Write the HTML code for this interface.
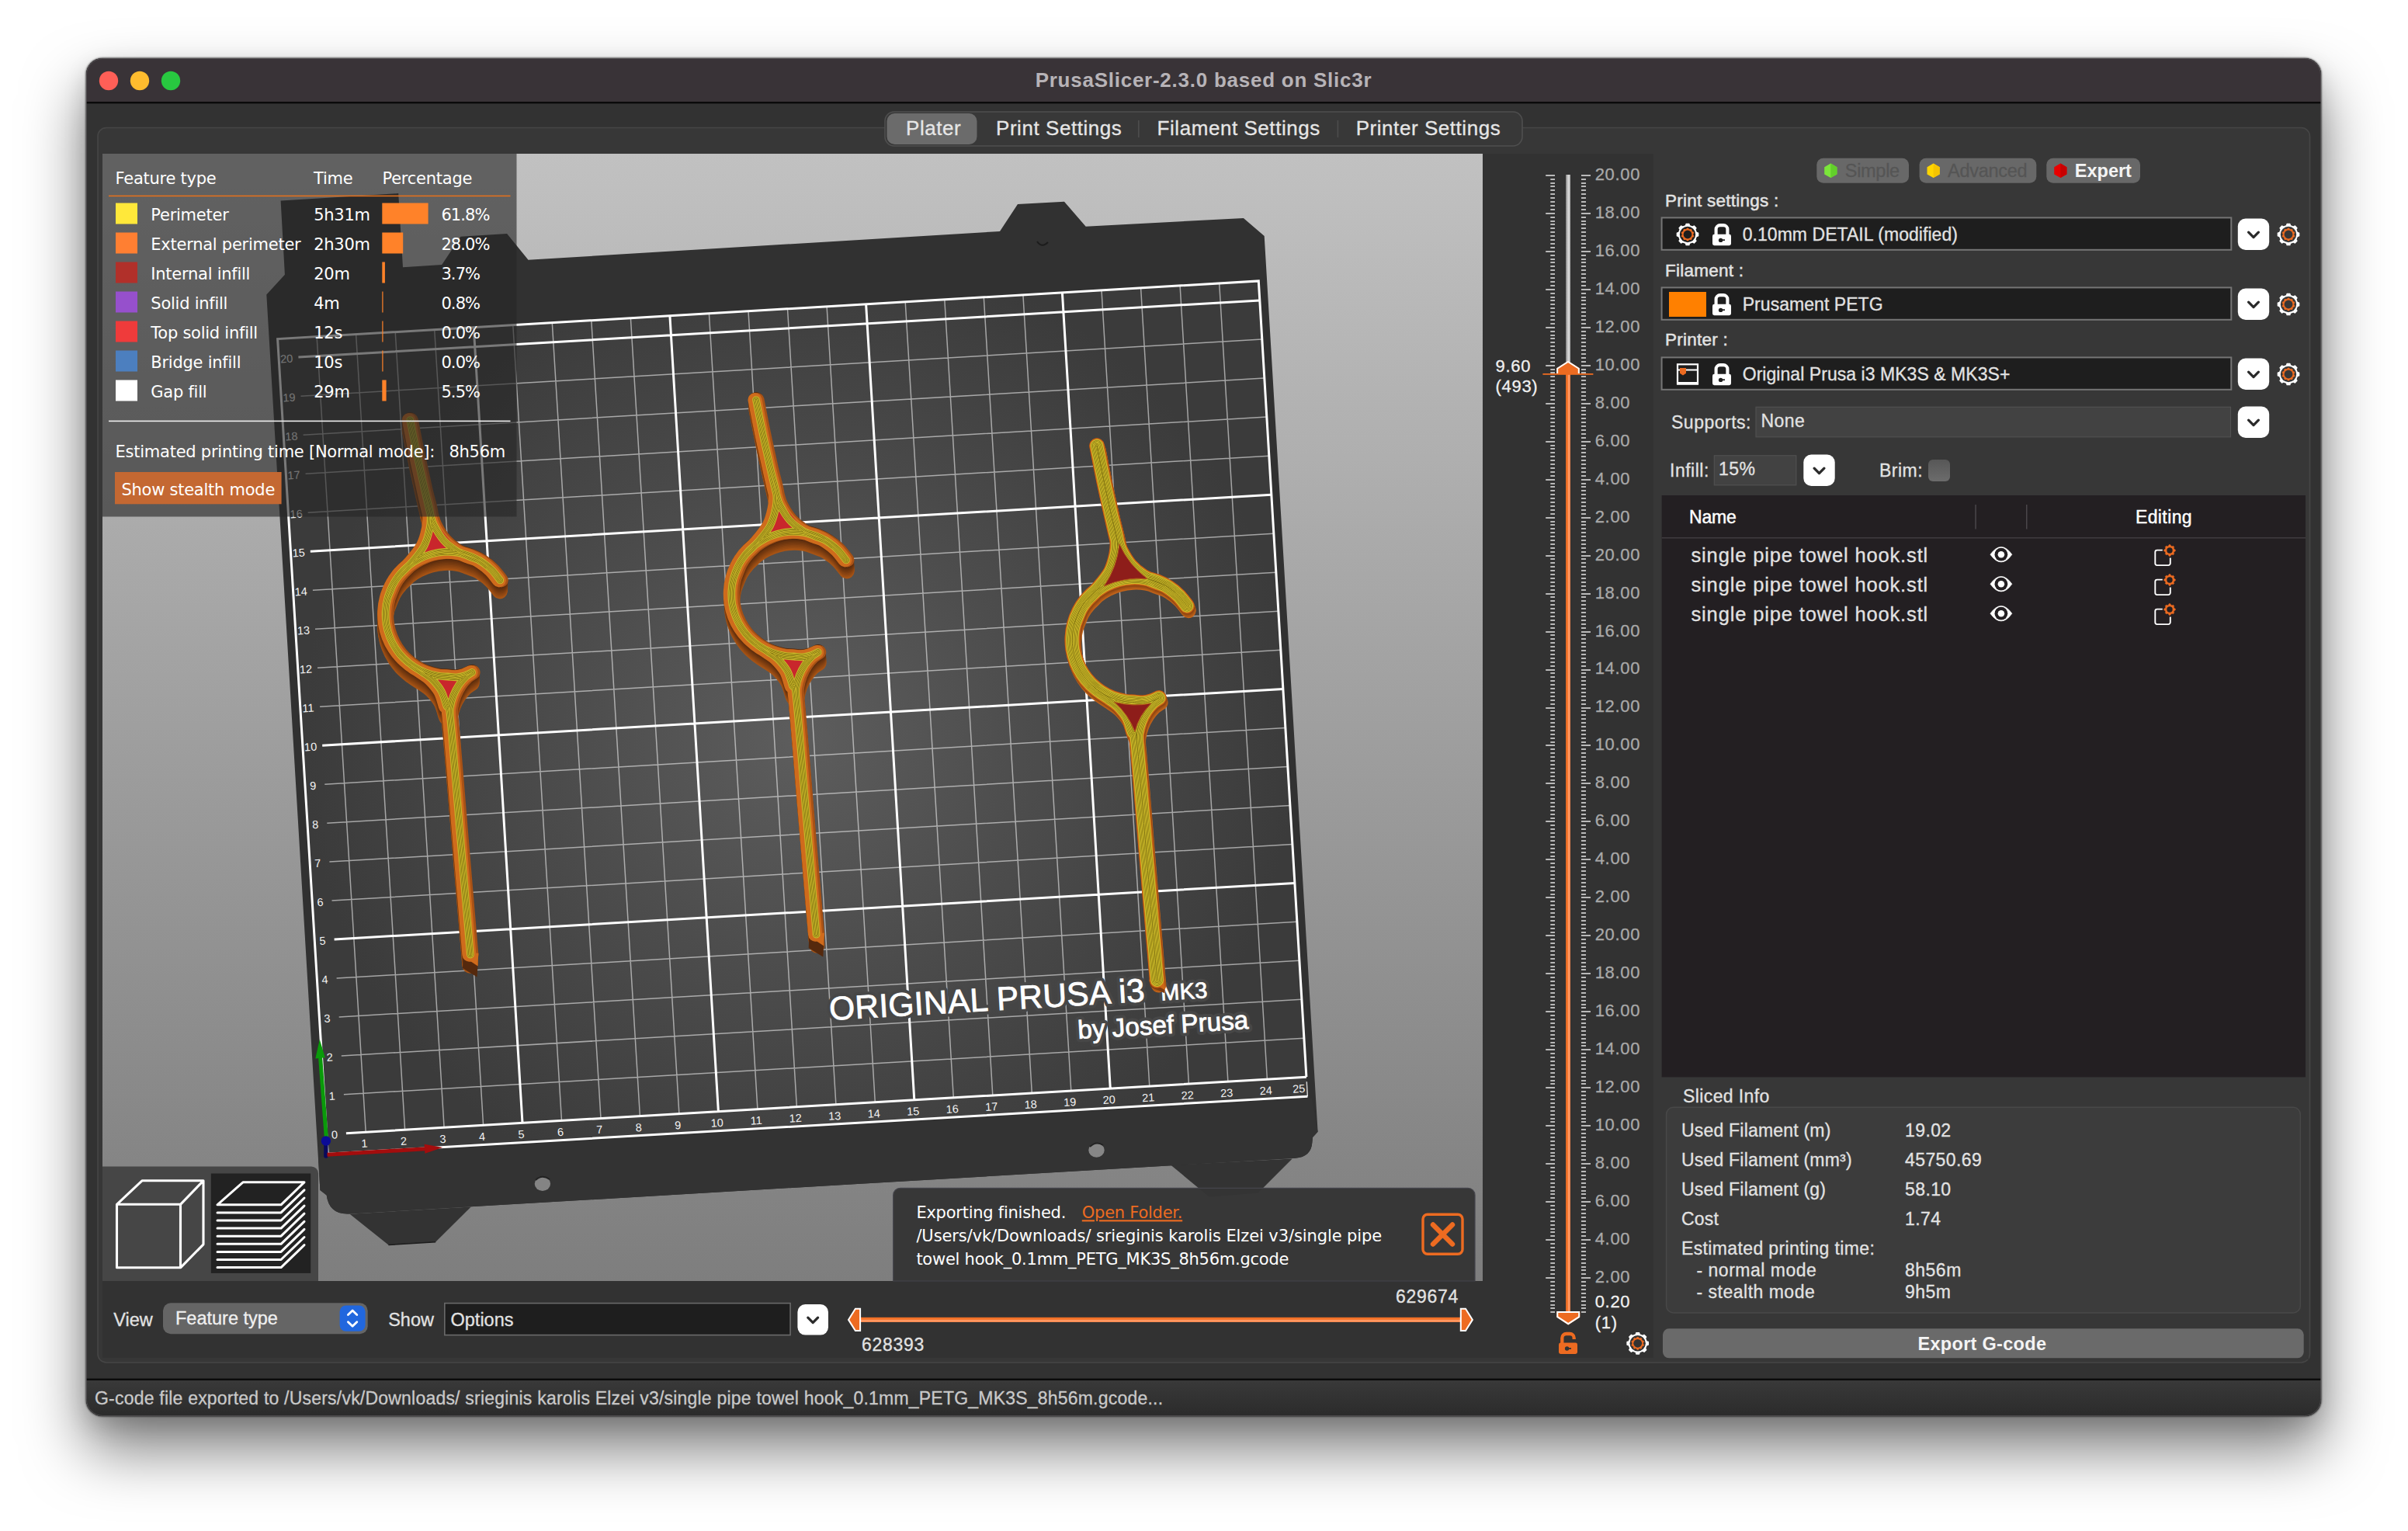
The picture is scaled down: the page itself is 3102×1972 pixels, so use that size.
<!DOCTYPE html>
<html><head><meta charset="utf-8"><title>PrusaSlicer</title>
<style>
html,body{margin:0;padding:0;background:#fff;}
body{width:3102px;height:1972px;position:relative;overflow:hidden;font-family:"Liberation Sans",sans-serif;}
#win{position:absolute;left:111px;top:75px;width:2879px;height:1749px;border-radius:21px;background:#323232;
box-shadow:0 0 2px 1px rgba(0,0,0,.55),0 42px 78px 2px rgba(0,0,0,.50),0 12px 30px rgba(0,0,0,.14);}
</style></head><body>
<div id="win"></div>
<svg width="3102" height="1972" viewBox="0 0 3102 1972" style="position:absolute;left:0;top:0" font-family="Liberation Sans, sans-serif">
<defs><clipPath id="winc"><rect x="111" y="75" width="2879" height="1749" rx="21"/></clipPath><linearGradient id="trk" x1="0" x2="1" y1="0" y2="0"><stop offset="0" stop-color="#8a8a8a"/><stop offset="0.55" stop-color="#dadada"/><stop offset="1" stop-color="#b8b8b8"/></linearGradient><linearGradient id="otrk" x1="0" x2="1" y1="0" y2="0"><stop offset="0" stop-color="#ee6c22"/><stop offset="0.45" stop-color="#f4772f"/><stop offset="0.55" stop-color="#ff9b66"/><stop offset="1" stop-color="#ff8a50"/></linearGradient><linearGradient id="htrk" x1="0" x2="0" y1="0" y2="1"><stop offset="0" stop-color="#ee6c22"/><stop offset="0.45" stop-color="#f4772f"/><stop offset="0.55" stop-color="#ff9b66"/><stop offset="1" stop-color="#ff8a50"/></linearGradient><linearGradient id="cbx" x1="0" x2="0" y1="0" y2="1"><stop offset="0" stop-color="#575757"/><stop offset="1" stop-color="#6c6c6c"/></linearGradient><linearGradient id="sbar" x1="0" x2="0" y1="0" y2="1"><stop offset="0" stop-color="#393939"/><stop offset="1" stop-color="#2b2b2b"/></linearGradient></defs>
<g clip-path="url(#winc)">
<rect x="111.0" y="75.0" width="2879.0" height="1749.0" fill="#323232"/>
<rect x="111.0" y="75.0" width="2879.0" height="57.0" fill="#393337"/>
<rect x="111.0" y="131.0" width="2879.0" height="2.4" fill="#0a0a0a"/>
<rect x="111.0" y="1775.6" width="2879.0" height="2.4" fill="#0a0a0a"/>
<rect x="111.0" y="1778.0" width="2879.0" height="46.0" fill="url(#sbar)"/>
</g>
<rect x="111.5" y="75.5" width="2878" height="1748" rx="21" fill="none" stroke="#5b585b" stroke-width="1" stroke-opacity="0.7"/>
<circle cx="140" cy="104" r="12.2" fill="#ff5f57"/>
<circle cx="180" cy="104" r="12.2" fill="#febc2e"/>
<circle cx="220" cy="104" r="12.2" fill="#28c840"/>
<text x="1550.5" y="112.0" font-size="26.0" fill="#b7b3b7" font-weight="bold" text-anchor="middle" letter-spacing="0.75">PrusaSlicer-2.3.0 based on Slic3r</text>
<rect x="126.0" y="164.5" width="2849.5" height="1590.5" fill="#373737" rx="11.0" stroke="#464646" stroke-width="1.6"/>
<rect x="132.0" y="198.0" width="1998.0" height="1551.0" fill="#323232"/>
<rect x="1140.0" y="144.0" width="821.0" height="44.0" fill="#383838" rx="12.0" stroke="#4f4f4f" stroke-width="1.6"/>
<rect x="1142.5" y="146.0" width="116.0" height="40.0" fill="#6b6b6b" rx="10.0"/>
<text x="1167.0" y="173.5" font-size="26.0" fill="#e6e6e6" letter-spacing="0.55" stroke="#e6e6e6" stroke-width="0.3">Plater</text>
<text x="1283.0" y="173.5" font-size="26.0" fill="#e6e6e6" letter-spacing="0.55" stroke="#e6e6e6" stroke-width="0.3">Print Settings</text>
<text x="1490.6" y="173.5" font-size="26.0" fill="#e6e6e6" letter-spacing="0.55" stroke="#e6e6e6" stroke-width="0.3">Filament Settings</text>
<text x="1746.7" y="173.5" font-size="26.0" fill="#e6e6e6" letter-spacing="0.55" stroke="#e6e6e6" stroke-width="0.3">Printer Settings</text>
<rect x="1466.0" y="155.0" width="1.6" height="22.0" fill="#4d4d4d"/>
<rect x="1722.6" y="155.0" width="1.6" height="22.0" fill="#4d4d4d"/>
<defs>
<linearGradient id="bgg" x1="0" y1="198" x2="0" y2="1650" gradientUnits="userSpaceOnUse"><stop offset="0" stop-color="#c1c1c1"/><stop offset="1" stop-color="#7e7e7e"/></linearGradient>
<radialGradient id="hl" cx="1030" cy="950" r="640" gradientUnits="userSpaceOnUse"><stop offset="0" stop-color="#5d5d5d"/><stop offset="0.45" stop-color="#4d4d4d"/><stop offset="1" stop-color="#3b3b3b"/></radialGradient>
<clipPath id="vpc"><rect x="132" y="198" width="1778" height="1452"/></clipPath>
</defs>
<g clip-path="url(#vpc)">
<rect x="132" y="198" width="1778" height="1452" fill="url(#bgg)"/>
<path d="M450.6 1563.7 L500.4 1603.6 L561.1 1599.7 L606.7 1554.6 Z" fill="#333333"/>
<path d="M500.4 1603.6 L561.1 1599.7" stroke="#1d1d1d" stroke-width="1.5"/>
<path d="M1508.4 1500.7 L1557.8 1541.8 L1620.8 1536.4 L1664.7 1492.5 Z" fill="#333333"/>
<path d="M343.3 379.5 L366.9 353.8 L361.6 258.6 L513.2 249.1 L519.0 344.3 L569.2 341.0 L593.3 304.8 L653.1 301.1 L680.5 334.7 L1288.0 298.0 L1311.0 263.0 L1371.0 259.7 L1398.7 291.7 L1601.9 280.9 L1628.7 304.0 L1697.6 1457.8 L1691.0 1465.0 L1690.3 1472.0 Q1689 1490 1668.6 1491.8 L450 1563.5 Q424 1565 420.7 1539.6 L412.4 1533 Z" fill="#313131"/>
<path d="M421.5 1489.5 L1690 1414.5 L1697.6 1457.8 L1691 1465 L1690.3 1472 Q1689 1490 1668.6 1491.8 L450 1563.5 Q424 1565 420.7 1539.6 L412.4 1533 L410 1490Z" fill="#333333"/>
<path d="M422.2 1486.2 L1684.4 1412.2 L1621.3 361.9 L357.6 436.6 Z" fill="url(#hl)"/>
<ellipse cx="698.9" cy="1524.7" rx="10.2" ry="9.2" fill="#848484"/><path d="M690 1520 Q698 1512 708 1519" stroke="#222" stroke-width="2" fill="none"/>
<ellipse cx="1412.5" cy="1481.5" rx="10.2" ry="9.2" fill="#868686"/><path d="M1404 1477 Q1412 1469 1421 1475" stroke="#222" stroke-width="2" fill="none"/>
<path d="M1336 311 Q1342 320 1350 312" stroke="#1c1c1c" stroke-width="2" fill="none"/>
<g fill="none" stroke="#fff">
<path d="M471.2 1458.2 L408.1 433.6 M521.6 1455.3 L458.6 430.6 M572.1 1452.3 L509.2 427.6 M622.6 1449.4 L559.7 424.7 M723.5 1443.4 L660.8 418.7 M774.0 1440.5 L711.3 415.7 M824.4 1437.5 L761.8 412.7 M874.9 1434.6 L812.4 409.7 M975.9 1428.7 L913.4 403.7 M1026.4 1425.7 L964.0 400.8 M1076.9 1422.7 L1014.5 397.8 M1127.3 1419.8 L1065.1 394.8 M1228.3 1413.9 L1166.2 388.8 M1278.8 1410.9 L1216.8 385.8 M1329.3 1407.9 L1267.3 382.8 M1379.8 1405.0 L1317.9 379.8 M1480.8 1399.0 L1419.0 373.9 M1531.4 1396.1 L1469.6 370.9 M1581.9 1393.1 L1520.1 367.9 M1632.4 1390.2 L1570.7 364.9 M442.9 1409.8 L1679.9 1337.2 M439.8 1359.9 L1676.9 1287.3 M436.7 1309.9 L1673.9 1237.3 M433.6 1260.0 L1670.9 1187.3 M427.5 1160.1 L1664.9 1087.4 M424.4 1110.1 L1661.9 1037.4 M421.3 1060.2 L1658.9 987.4 M418.3 1010.2 L1655.9 937.4 M412.1 910.2 L1649.9 837.3 M409.0 860.2 L1646.9 787.3 M406.0 810.3 L1643.9 737.3 M402.9 760.3 L1640.8 687.3 M396.7 660.2 L1634.8 587.2 M393.6 610.2 L1631.8 537.1 M390.6 560.2 L1628.8 487.1 M387.5 510.2 L1625.8 437.0" stroke-width="1.5" stroke-opacity="0.54"/>
<path d="M673.0 1446.4 L610.2 421.7 M925.4 1431.6 L862.9 406.7 M1177.8 1416.8 L1115.6 391.8 M1430.3 1402.0 L1368.4 376.8 M445.9 1459.7 L1682.9 1387.2 M430.6 1210.0 L1667.9 1137.4 M415.2 960.2 L1652.9 887.4 M399.8 710.2 L1637.8 637.2 M384.4 460.1 L1622.8 386.9" stroke-width="3"/>
<path d="M422.2 1486.2 L357.6 436.6 L1621.3 361.9 L1682.9 1387.2 M422.2 1486.2 L1684.4 1412.2" stroke-width="3"/>
<path d="M1684.4 1412.2 L1683.3 1393.2" stroke-width="1.4" stroke-opacity="0.8"/>
</g>
<g font-family="Liberation Sans, sans-serif" font-size="14.5" fill="#f2f2f2" text-anchor="middle">
<text x="469.5" y="1477.9" transform="rotate(-3.4 469.5 1472.9)">1</text>
<text x="520.0" y="1474.9" transform="rotate(-3.4 520.0 1469.9)">2</text>
<text x="570.5" y="1472.0" transform="rotate(-3.4 570.5 1467.0)">3</text>
<text x="620.9" y="1469.0" transform="rotate(-3.4 620.9 1464.0)">4</text>
<text x="671.4" y="1466.0" transform="rotate(-3.4 671.4 1461.0)">5</text>
<text x="721.9" y="1463.1" transform="rotate(-3.4 721.9 1458.1)">6</text>
<text x="772.3" y="1460.1" transform="rotate(-3.4 772.3 1455.1)">7</text>
<text x="822.8" y="1457.2" transform="rotate(-3.4 822.8 1452.2)">8</text>
<text x="873.3" y="1454.2" transform="rotate(-3.4 873.3 1449.2)">9</text>
<text x="923.8" y="1451.2" transform="rotate(-3.4 923.8 1446.2)">10</text>
<text x="974.2" y="1448.3" transform="rotate(-3.4 974.2 1443.3)">11</text>
<text x="1024.7" y="1445.3" transform="rotate(-3.4 1024.7 1440.3)">12</text>
<text x="1075.2" y="1442.4" transform="rotate(-3.4 1075.2 1437.4)">13</text>
<text x="1125.7" y="1439.4" transform="rotate(-3.4 1125.7 1434.4)">14</text>
<text x="1176.2" y="1436.4" transform="rotate(-3.4 1176.2 1431.4)">15</text>
<text x="1226.7" y="1433.5" transform="rotate(-3.4 1226.7 1428.5)">16</text>
<text x="1277.2" y="1430.5" transform="rotate(-3.4 1277.2 1425.5)">17</text>
<text x="1327.7" y="1427.6" transform="rotate(-3.4 1327.7 1422.6)">18</text>
<text x="1378.2" y="1424.6" transform="rotate(-3.4 1378.2 1419.6)">19</text>
<text x="1428.7" y="1421.6" transform="rotate(-3.4 1428.7 1416.6)">20</text>
<text x="1479.2" y="1418.7" transform="rotate(-3.4 1479.2 1413.7)">21</text>
<text x="1529.7" y="1415.7" transform="rotate(-3.4 1529.7 1410.7)">22</text>
<text x="1580.2" y="1412.8" transform="rotate(-3.4 1580.2 1407.8)">23</text>
<text x="1630.7" y="1409.8" transform="rotate(-3.4 1630.7 1404.8)">24</text>
<text x="1673.2" y="1407.3" transform="rotate(-3.4 1673.2 1402.3)">25</text>
<text x="430.9" y="1466.6" transform="rotate(-3.4 430.9 1461.6)">0</text>
<text x="427.8" y="1416.7" transform="rotate(-3.4 427.8 1411.7)">1</text>
<text x="424.7" y="1366.8" transform="rotate(-3.4 424.7 1361.8)">2</text>
<text x="421.6" y="1316.8" transform="rotate(-3.4 421.6 1311.8)">3</text>
<text x="418.6" y="1266.9" transform="rotate(-3.4 418.6 1261.9)">4</text>
<text x="415.5" y="1216.9" transform="rotate(-3.4 415.5 1211.9)">5</text>
<text x="412.4" y="1167.0" transform="rotate(-3.4 412.4 1162.0)">6</text>
<text x="409.3" y="1117.0" transform="rotate(-3.4 409.3 1112.0)">7</text>
<text x="406.3" y="1067.1" transform="rotate(-3.4 406.3 1062.1)">8</text>
<text x="403.2" y="1017.1" transform="rotate(-3.4 403.2 1012.1)">9</text>
<text x="400.1" y="967.1" transform="rotate(-3.4 400.1 962.1)">10</text>
<text x="397.0" y="917.1" transform="rotate(-3.4 397.0 912.1)">11</text>
<text x="393.9" y="867.1" transform="rotate(-3.4 393.9 862.1)">12</text>
<text x="390.9" y="817.1" transform="rotate(-3.4 390.9 812.1)">13</text>
<text x="387.8" y="767.1" transform="rotate(-3.4 387.8 762.1)">14</text>
<text x="384.7" y="717.1" transform="rotate(-3.4 384.7 712.1)">15</text>
<text x="381.6" y="667.1" transform="rotate(-3.4 381.6 662.1)">16</text>
<text x="378.5" y="617.1" transform="rotate(-3.4 378.5 612.1)">17</text>
<text x="375.5" y="567.1" transform="rotate(-3.4 375.5 562.1)">18</text>
<text x="372.4" y="517.1" transform="rotate(-3.4 372.4 512.1)">19</text>
<text x="369.3" y="467.0" transform="rotate(-3.4 369.3 462.0)">20</text>
</g>
<g font-family="Liberation Sans, sans-serif" fill="#fff" transform="rotate(-3.4 1069 1314)"><g stroke="#474747" stroke-width="9" stroke-linejoin="round"><text x="1069" y="1314" font-size="42.5" letter-spacing="0.3">ORIGINAL PRUSA i3 <tspan font-size="29" dx="8">MK3</tspan></text><text x="1387" y="1357" font-size="33.3">by Josef Prusa</text></g><g stroke="#fff" stroke-width="0.8"><text x="1069" y="1314" font-size="42.5" letter-spacing="0.3">ORIGINAL PRUSA i3 <tspan font-size="29" dx="8">MK3</tspan></text><text x="1387" y="1357" font-size="33.3">by Josef Prusa</text></g></g>
<defs><path id="hk1" d="M644.3 747.4C642.5 745.2 637.6 738.3 633.7 734.4C629.8 730.4 625.3 726.8 620.6 723.8C616.0 720.8 610.9 718.2 605.7 716.2C600.5 714.2 595.0 712.7 589.5 711.8C584.0 710.9 578.2 710.6 572.7 710.9C567.1 711.2 561.5 712.1 556.1 713.6C550.7 715.0 545.4 717.1 540.4 719.6C535.4 722.1 530.7 725.2 526.3 728.7C522.0 732.2 518.0 736.3 514.4 740.6C510.9 744.9 507.8 749.7 505.3 754.7C502.8 759.7 500.7 765.0 499.3 770.4C497.8 775.8 496.9 781.4 496.7 787.0C496.4 792.5 496.7 798.2 497.5 803.7C498.4 809.2 499.9 814.8 501.9 820.0C503.9 825.2 506.5 830.3 509.5 834.9C512.5 839.6 516.1 844.0 520.1 848.0C524.0 851.9 528.5 855.5 533.1 858.5C537.8 861.6 542.9 864.2 548.1 866.2C553.3 868.2 559.5 869.6 564.3 870.5C569.1 871.4 573.0 871.2 576.9 871.5C580.8 871.8 584.2 872.6 587.9 872.3C591.5 872.1 595.4 871.2 598.8 870.1C602.2 869.1 606.6 866.7 608.1 866.0 M528.3 541.1C529.8 548.5 534.1 570.8 537.1 585.5C540.2 600.2 543.8 616.6 546.7 629.4C549.6 642.2 553.3 653.6 554.4 662.3C555.5 671.0 554.7 674.6 553.3 681.5C551.9 688.3 549.9 696.3 546.2 703.4C542.4 710.5 535.9 718.0 530.8 724.0C525.7 730.0 519.4 735.1 515.5 739.6C511.5 744.1 510.0 745.9 507.3 751.0C504.6 756.1 500.6 767.1 499.3 770.4 M528.3 541.1C529.8 548.5 534.1 570.8 537.1 585.5C540.2 600.2 543.8 616.6 546.7 629.4C549.6 642.2 552.3 654.4 554.4 662.3C556.5 670.2 556.2 671.0 559.1 676.6C561.9 682.1 566.6 690.3 571.4 695.7C576.2 701.2 582.4 706.0 587.9 709.5C593.3 712.9 599.4 714.6 604.3 716.6C609.2 718.6 613.0 719.4 617.1 721.6C621.1 723.8 626.6 728.3 628.5 729.6 M520.1 848.0C521.9 849.5 526.8 854.0 530.8 857.0C534.8 859.9 539.7 862.8 544.0 865.7C548.2 868.7 552.2 870.7 556.3 874.8C560.4 878.9 565.5 884.7 568.7 890.4C571.8 896.1 573.4 903.7 575.2 909.1C577.1 914.4 577.1 896.1 579.9 922.6C582.7 949.1 587.9 1016.8 592.2 1068.0C596.5 1119.2 603.6 1202.8 605.9 1229.7 M608.1 866.0C606.8 867.0 602.7 869.1 599.9 871.8C597.1 874.5 593.8 878.2 591.1 882.2C588.5 886.2 585.9 891.0 584.0 895.9C582.1 900.8 580.6 907.4 579.9 911.8C579.2 916.3 579.9 920.8 579.9 922.6"/><path id="hk2" d="M1090.0 721.4C1088.2 719.2 1083.3 712.3 1079.4 708.4C1075.5 704.4 1071.0 700.8 1066.3 697.8C1061.7 694.8 1056.6 692.2 1051.4 690.2C1046.2 688.2 1040.7 686.7 1035.2 685.8C1029.7 684.9 1023.9 684.6 1018.4 684.9C1012.8 685.2 1007.2 686.1 1001.8 687.6C996.4 689.0 991.1 691.1 986.1 693.6C981.1 696.1 976.4 699.2 972.0 702.7C967.7 706.2 963.7 710.3 960.1 714.6C956.6 718.9 953.5 723.7 951.0 728.7C948.5 733.7 946.4 739.0 945.0 744.4C943.5 749.8 942.6 755.4 942.4 761.0C942.1 766.5 942.4 772.2 943.2 777.7C944.1 783.2 945.6 788.8 947.6 794.0C949.6 799.2 952.2 804.3 955.2 808.9C958.2 813.6 961.8 818.0 965.8 822.0C969.7 825.9 974.2 829.5 978.8 832.5C983.5 835.6 988.6 838.2 993.8 840.2C999.0 842.2 1005.2 843.6 1010.0 844.5C1014.8 845.4 1018.7 845.2 1022.6 845.5C1026.5 845.8 1029.9 846.6 1033.6 846.3C1037.2 846.1 1041.1 845.2 1044.5 844.1C1047.9 843.1 1052.3 840.7 1053.8 840.0 M974.0 515.1C975.5 522.5 979.8 544.8 982.8 559.5C985.9 574.2 989.5 590.6 992.4 603.4C995.3 616.2 999.0 627.6 1000.1 636.3C1001.2 645.0 1000.4 648.6 999.0 655.5C997.6 662.3 995.6 670.3 991.9 677.4C988.1 684.5 981.6 692.0 976.5 698.0C971.4 704.0 965.1 709.1 961.2 713.6C957.2 718.1 955.7 719.9 953.0 725.0C950.3 730.1 946.3 741.1 945.0 744.4 M974.0 515.1C975.5 522.5 979.8 544.8 982.8 559.5C985.9 574.2 989.5 590.6 992.4 603.4C995.3 616.2 998.0 628.4 1000.1 636.3C1002.2 644.2 1001.9 645.0 1004.8 650.6C1007.6 656.1 1012.3 664.3 1017.1 669.7C1021.9 675.2 1028.1 680.0 1033.6 683.5C1039.0 686.9 1045.1 688.6 1050.0 690.6C1054.9 692.6 1058.7 693.4 1062.8 695.6C1066.8 697.8 1072.3 702.3 1074.2 703.6 M965.8 822.0C967.6 823.5 972.5 828.0 976.5 831.0C980.5 833.9 985.4 836.8 989.7 839.7C993.9 842.7 997.9 844.7 1002.0 848.8C1006.1 852.9 1011.2 858.7 1014.4 864.4C1017.5 870.1 1019.1 877.7 1020.9 883.1C1022.8 888.4 1022.8 870.1 1025.6 896.6C1028.4 923.1 1033.6 990.8 1037.9 1042.0C1042.2 1093.2 1049.3 1176.8 1051.6 1203.7 M1053.8 840.0C1052.5 841.0 1048.4 843.1 1045.6 845.8C1042.8 848.5 1039.5 852.2 1036.8 856.2C1034.2 860.2 1031.6 865.0 1029.7 869.9C1027.8 874.8 1026.3 881.4 1025.6 885.8C1024.9 890.3 1025.6 894.8 1025.6 896.6"/><path id="hk3" d="M1529.0 780.4C1527.2 778.2 1522.3 771.3 1518.4 767.4C1514.5 763.4 1510.0 759.8 1505.3 756.8C1500.7 753.8 1495.6 751.2 1490.4 749.2C1485.2 747.2 1479.7 745.7 1474.2 744.8C1468.7 743.9 1462.9 743.6 1457.4 743.9C1451.8 744.2 1446.2 745.1 1440.8 746.6C1435.4 748.0 1430.1 750.1 1425.1 752.6C1420.1 755.1 1415.4 758.2 1411.0 761.7C1406.7 765.2 1402.7 769.3 1399.1 773.6C1395.6 777.9 1392.5 782.7 1390.0 787.7C1387.5 792.7 1385.4 798.0 1384.0 803.4C1382.5 808.8 1381.6 814.4 1381.4 820.0C1381.1 825.5 1381.4 831.2 1382.2 836.7C1383.1 842.2 1384.6 847.8 1386.6 853.0C1388.6 858.2 1391.2 863.3 1394.2 867.9C1397.2 872.6 1400.8 877.0 1404.8 881.0C1408.7 884.9 1413.2 888.5 1417.8 891.5C1422.5 894.6 1427.6 897.2 1432.8 899.2C1438.0 901.2 1444.2 902.6 1449.0 903.5C1453.8 904.4 1457.7 904.2 1461.6 904.5C1465.5 904.8 1468.9 905.6 1472.6 905.3C1476.2 905.1 1480.1 904.2 1483.5 903.1C1486.9 902.1 1491.3 899.7 1492.8 899.0 M1413.0 574.1C1414.5 581.5 1418.8 603.8 1421.8 618.5C1424.9 633.2 1428.5 649.6 1431.4 662.4C1434.3 675.2 1438.0 686.6 1439.1 695.3C1440.2 704.0 1439.4 707.6 1438.0 714.5C1436.6 721.3 1434.6 729.3 1430.9 736.4C1427.1 743.5 1420.6 751.0 1415.5 757.0C1410.4 763.0 1404.1 768.1 1400.2 772.6C1396.2 777.1 1394.7 778.9 1392.0 784.0C1389.3 789.1 1385.3 800.1 1384.0 803.4 M1413.0 574.1C1414.5 581.5 1418.8 603.8 1421.8 618.5C1424.9 633.2 1428.5 649.6 1431.4 662.4C1434.3 675.2 1437.0 687.4 1439.1 695.3C1441.2 703.2 1440.9 704.0 1443.8 709.6C1446.6 715.1 1451.3 723.3 1456.1 728.7C1460.9 734.2 1467.1 739.0 1472.6 742.5C1478.0 745.9 1484.1 747.6 1489.0 749.6C1493.9 751.6 1497.7 752.4 1501.8 754.6C1505.8 756.8 1511.3 761.3 1513.2 762.6 M1404.8 881.0C1406.6 882.5 1411.5 887.0 1415.5 890.0C1419.5 892.9 1424.4 895.8 1428.7 898.7C1432.9 901.7 1436.9 903.7 1441.0 907.8C1445.1 911.9 1450.2 917.7 1453.4 923.4C1456.5 929.1 1458.1 936.7 1459.9 942.1C1461.8 947.4 1461.8 929.1 1464.6 955.6C1467.4 982.1 1472.6 1049.8 1476.9 1101.0C1481.2 1152.2 1488.3 1235.8 1490.6 1262.7 M1492.8 899.0C1491.5 900.0 1487.4 902.1 1484.6 904.8C1481.8 907.5 1478.5 911.2 1475.8 915.2C1473.2 919.2 1470.6 924.0 1468.7 928.9C1466.8 933.8 1465.3 940.4 1464.6 944.8C1463.9 949.3 1464.6 953.8 1464.6 955.6"/></defs><g fill="none" stroke-linecap="round" stroke-linejoin="round"><use href="#hk1" transform="translate(-0.5 14.0)" stroke="#a85415" stroke-width="20.0"/><use href="#hk1" transform="translate(-0.5 12.6)" stroke="#a05014" stroke-width="20.0"/><use href="#hk1" transform="translate(-0.4 11.2)" stroke="#974b13" stroke-width="20.0"/><use href="#hk1" transform="translate(-0.3 9.8)" stroke="#8f4713" stroke-width="20.0"/><use href="#hk1" transform="translate(-0.3 8.4)" stroke="#874312" stroke-width="20.0"/><use href="#hk1" transform="translate(-0.2 7.0)" stroke="#7e3e11" stroke-width="20.0"/><use href="#hk1" transform="translate(-0.2 5.6)" stroke="#763a10" stroke-width="20.0"/><use href="#hk1" transform="translate(-0.1 4.2)" stroke="#6e360f" stroke-width="20.0"/><use href="#hk1" transform="translate(-0.1 2.8)" stroke="#66320f" stroke-width="20.0"/><use href="#hk1" transform="translate(-0.1 1.4)" stroke="#5d2d0e" stroke-width="20.0"/><use href="#hk1" stroke="#55290d" stroke-width="20.0"/><polygon points="596.7,1232.0 615.4,1244.2 614.6,1258.6 596.0,1247.1" fill="#55290d" stroke="none"/><use href="#hk1" transform="translate(1.5 0.0)" stroke="#a85216" stroke-width="18.0"/><use href="#hk1" transform="translate(-1.5 0.0)" stroke="#cf6b1c" stroke-width="18.0"/><polygon points="595.4,1227.7 616.4,1227.7 615.4,1244.2 596.7,1232.0" fill="#cf6b1c" stroke="none"/><path d="M558.2 670.5 L542.6 717.1 L593.3 713.0 Z" fill="#c9262c" stroke="none"/><path d="M554.9 872.1 L594.7 872.9 L576.3 903.6 Z" fill="#c9262c" stroke="none"/><use href="#hk1" stroke="#c8b629" stroke-width="9.8"/><use href="#hk1" stroke="#72640e" stroke-width="7.2"/><use href="#hk1" stroke="#c8b629" stroke-width="6.3"/><use href="#hk1" stroke="#72640e" stroke-width="4.6"/><use href="#hk1" stroke="#c8b629" stroke-width="3.7"/><use href="#hk1" stroke="#72640e" stroke-width="2.0"/><use href="#hk1" stroke="#c8b629" stroke-width="1.1"/></g><g fill="none" stroke-linecap="round" stroke-linejoin="round"><use href="#hk2" transform="translate(0.7 14.0)" stroke="#a85415" stroke-width="20.0"/><use href="#hk2" transform="translate(0.6 12.6)" stroke="#a05014" stroke-width="20.0"/><use href="#hk2" transform="translate(0.6 11.2)" stroke="#974b13" stroke-width="20.0"/><use href="#hk2" transform="translate(0.5 9.8)" stroke="#8f4713" stroke-width="20.0"/><use href="#hk2" transform="translate(0.4 8.4)" stroke="#874312" stroke-width="20.0"/><use href="#hk2" transform="translate(0.3 7.0)" stroke="#7e3e11" stroke-width="20.0"/><use href="#hk2" transform="translate(0.3 5.6)" stroke="#763a10" stroke-width="20.0"/><use href="#hk2" transform="translate(0.2 4.2)" stroke="#6e360f" stroke-width="20.0"/><use href="#hk2" transform="translate(0.1 2.8)" stroke="#66320f" stroke-width="20.0"/><use href="#hk2" transform="translate(0.1 1.4)" stroke="#5d2d0e" stroke-width="20.0"/><use href="#hk2" stroke="#55290d" stroke-width="20.0"/><polygon points="1042.4,1206.0 1061.1,1218.2 1060.3,1232.6 1041.7,1221.1" fill="#55290d" stroke="none"/><use href="#hk2" transform="translate(1.5 0.0)" stroke="#a85216" stroke-width="18.0"/><use href="#hk2" transform="translate(-1.5 0.0)" stroke="#cf6b1c" stroke-width="18.0"/><polygon points="1041.1,1201.7 1062.1,1201.7 1061.1,1218.2 1042.4,1206.0" fill="#cf6b1c" stroke="none"/><path d="M1003.9 644.5 L988.3 691.1 L1039.0 687.0 Z" fill="#c9262c" stroke="none"/><path d="M1000.6 846.1 L1040.4 846.9 L1022.0 877.6 Z" fill="#c9262c" stroke="none"/><use href="#hk2" stroke="#c8b629" stroke-width="9.8"/><use href="#hk2" stroke="#72640e" stroke-width="7.2"/><use href="#hk2" stroke="#c8b629" stroke-width="6.3"/><use href="#hk2" stroke="#72640e" stroke-width="4.6"/><use href="#hk2" stroke="#c8b629" stroke-width="3.7"/><use href="#hk2" stroke="#72640e" stroke-width="2.0"/><use href="#hk2" stroke="#c8b629" stroke-width="1.1"/></g><g fill="none" stroke-linecap="round" stroke-linejoin="round"><use href="#hk3" transform="translate(2.0 6.0)" stroke="#c2641a" stroke-width="19.5"/><use href="#hk3" transform="translate(1.6 4.8)" stroke="#b55c18" stroke-width="19.5"/><use href="#hk3" transform="translate(1.2 3.6)" stroke="#a75416" stroke-width="19.5"/><use href="#hk3" transform="translate(0.8 2.4)" stroke="#9a4c14" stroke-width="19.5"/><use href="#hk3" transform="translate(0.4 1.2)" stroke="#8c4412" stroke-width="19.5"/><use href="#hk3" stroke="#7f3c10" stroke-width="19.5"/><polygon points="1480.3,1264.1 1500.7,1275.0 1500.2,1279.2 1482.0,1271.0" fill="#7f3c10" stroke="none"/><use href="#hk3" stroke="#cc6716" stroke-width="19.5"/><polygon points="1480.8,1260.7 1500.3,1260.7 1500.7,1275.0 1480.3,1264.1" fill="#cc6716" stroke="none"/><path d="M1442.9 703.5 L1427.3 750.1 L1478.0 746.0 Z" fill="#8e1d1a" stroke="none"/><path d="M1439.6 905.1 L1479.4 905.9 L1461.0 936.6 Z" fill="#8e1d1a" stroke="none"/><use href="#hk3" stroke="#cfbd2b" stroke-width="16.6"/><use href="#hk3" stroke="#7a6b0f" stroke-width="14.0"/><use href="#hk3" stroke="#cfbd2b" stroke-width="13.1"/><use href="#hk3" stroke="#7a6b0f" stroke-width="11.4"/><use href="#hk3" stroke="#cfbd2b" stroke-width="10.5"/><use href="#hk3" stroke="#7a6b0f" stroke-width="8.8"/><use href="#hk3" stroke="#cfbd2b" stroke-width="7.9"/><use href="#hk3" stroke="#7a6b0f" stroke-width="6.2"/><use href="#hk3" stroke="#cfbd2b" stroke-width="5.3"/><use href="#hk3" stroke="#7a6b0f" stroke-width="3.6"/><use href="#hk3" stroke="#cfbd2b" stroke-width="2.7"/><use href="#hk3" stroke="#7a6b0f" stroke-width="1.0"/><use href="#hk3" stroke="#cfbd2b" stroke-width="0.1"/><path d="M1442.0 701.0Q1439.0 730.6 1422.3 755.0Q1448.9 742.9 1478.0 745.5Q1454.3 728.0 1442.0 701.0Z" fill="#8e1d1a" stroke="#b0541a" stroke-width="1"/><path d="M1436.0 904.5Q1459.9 910.8 1483.0 906.0Q1467.0 921.3 1462.0 942.5Q1454.1 920.9 1436.0 904.5Z" fill="#8e1d1a" stroke="#b0541a" stroke-width="1"/></g>
<path d="M420.3 1465 L412.6 1362" stroke="#0a9a0a" stroke-width="5"/><path d="M406.3 1363.5 L418.8 1362.3 L411.8 1338.8Z" fill="#0a9a0a"/>
<path d="M419.9 1470 L419.9 1489" stroke="#0a0a5c" stroke-width="5.5" stroke-linecap="round"/>
<path d="M421.5 1487.3 L548 1479.8" stroke="#a30d0d" stroke-width="5"/><path d="M546.6 1473.8 L547.4 1485.8 L570.2 1478.1Z" fill="#a30d0d"/>
<circle cx="419.9" cy="1469.5" r="6.2" fill="#0b0b96"/>
</g>
<rect x="132.0" y="198.0" width="533.5" height="467.5" fill="#262626" fill-opacity="0.62"/>
<text x="148.6" y="237.3" font-size="21.0" fill="#ffffff" letter-spacing="-0.25" font-family="DejaVu Sans, Liberation Sans, sans-serif">Feature type</text>
<text x="404.0" y="237.3" font-size="21.0" fill="#ffffff" letter-spacing="-0.25" font-family="DejaVu Sans, Liberation Sans, sans-serif">Time</text>
<text x="492.5" y="237.3" font-size="21.0" fill="#ffffff" letter-spacing="-0.25" font-family="DejaVu Sans, Liberation Sans, sans-serif">Percentage</text>
<rect x="140.0" y="251.6" width="517.5" height="1.6" fill="#e2711f"/>
<rect x="149.0" y="261.5" width="28.0" height="27.0" fill="#ffe83a"/>
<text x="194.3" y="283.8" font-size="21.0" fill="#ffffff" letter-spacing="-0.25" font-family="DejaVu Sans, Liberation Sans, sans-serif">Perimeter</text>
<text x="404.2" y="283.8" font-size="21.0" fill="#ffffff" letter-spacing="-0.25" font-family="DejaVu Sans, Liberation Sans, sans-serif">5h31m</text>
<rect x="492.3" y="261.5" width="59.3" height="27.0" fill="#ff8229"/>
<text x="568.4" y="283.8" font-size="21.0" fill="#fff" letter-spacing="-0.90" font-family="DejaVu Sans, Liberation Sans, sans-serif">61.8%</text>
<rect x="149.0" y="299.5" width="28.0" height="27.0" fill="#ff7f32"/>
<text x="194.3" y="321.8" font-size="21.0" fill="#ffffff" letter-spacing="-0.25" font-family="DejaVu Sans, Liberation Sans, sans-serif">External perimeter</text>
<text x="404.2" y="321.8" font-size="21.0" fill="#ffffff" letter-spacing="-0.25" font-family="DejaVu Sans, Liberation Sans, sans-serif">2h30m</text>
<rect x="492.3" y="299.5" width="26.9" height="27.0" fill="#ff8229"/>
<text x="568.4" y="321.8" font-size="21.0" fill="#fff" letter-spacing="-0.90" font-family="DejaVu Sans, Liberation Sans, sans-serif">28.0%</text>
<rect x="149.0" y="337.5" width="28.0" height="27.0" fill="#b1302a"/>
<text x="194.3" y="359.8" font-size="21.0" fill="#ffffff" letter-spacing="-0.25" font-family="DejaVu Sans, Liberation Sans, sans-serif">Internal infill</text>
<text x="404.2" y="359.8" font-size="21.0" fill="#ffffff" letter-spacing="-0.25" font-family="DejaVu Sans, Liberation Sans, sans-serif">20m</text>
<rect x="492.3" y="337.5" width="3.6" height="27.0" fill="#ff8229"/>
<text x="568.4" y="359.8" font-size="21.0" fill="#fff" letter-spacing="-0.90" font-family="DejaVu Sans, Liberation Sans, sans-serif">3.7%</text>
<rect x="149.0" y="375.5" width="28.0" height="27.0" fill="#9650cc"/>
<text x="194.3" y="397.8" font-size="21.0" fill="#ffffff" letter-spacing="-0.25" font-family="DejaVu Sans, Liberation Sans, sans-serif">Solid infill</text>
<text x="404.2" y="397.8" font-size="21.0" fill="#ffffff" letter-spacing="-0.25" font-family="DejaVu Sans, Liberation Sans, sans-serif">4m</text>
<rect x="492.3" y="375.5" width="1.2" height="27.0" fill="#ff8229"/>
<text x="568.4" y="397.8" font-size="21.0" fill="#fff" letter-spacing="-0.90" font-family="DejaVu Sans, Liberation Sans, sans-serif">0.8%</text>
<rect x="149.0" y="413.5" width="28.0" height="27.0" fill="#ef3b3b"/>
<text x="194.3" y="435.8" font-size="21.0" fill="#ffffff" letter-spacing="-0.25" font-family="DejaVu Sans, Liberation Sans, sans-serif">Top solid infill</text>
<text x="404.2" y="435.8" font-size="21.0" fill="#ffffff" letter-spacing="-0.25" font-family="DejaVu Sans, Liberation Sans, sans-serif">12s</text>
<rect x="492.3" y="413.5" width="1.2" height="27.0" fill="#ff8229"/>
<text x="568.4" y="435.8" font-size="21.0" fill="#fff" letter-spacing="-0.90" font-family="DejaVu Sans, Liberation Sans, sans-serif">0.0%</text>
<rect x="149.0" y="451.5" width="28.0" height="27.0" fill="#4c7fbf"/>
<text x="194.3" y="473.8" font-size="21.0" fill="#ffffff" letter-spacing="-0.25" font-family="DejaVu Sans, Liberation Sans, sans-serif">Bridge infill</text>
<text x="404.2" y="473.8" font-size="21.0" fill="#ffffff" letter-spacing="-0.25" font-family="DejaVu Sans, Liberation Sans, sans-serif">10s</text>
<rect x="492.3" y="451.5" width="1.2" height="27.0" fill="#ff8229"/>
<text x="568.4" y="473.8" font-size="21.0" fill="#fff" letter-spacing="-0.90" font-family="DejaVu Sans, Liberation Sans, sans-serif">0.0%</text>
<rect x="149.0" y="489.5" width="28.0" height="27.0" fill="#ffffff"/>
<text x="194.3" y="511.8" font-size="21.0" fill="#ffffff" letter-spacing="-0.25" font-family="DejaVu Sans, Liberation Sans, sans-serif">Gap fill</text>
<text x="404.2" y="511.8" font-size="21.0" fill="#ffffff" letter-spacing="-0.25" font-family="DejaVu Sans, Liberation Sans, sans-serif">29m</text>
<rect x="492.3" y="489.5" width="5.3" height="27.0" fill="#ff8229"/>
<text x="568.4" y="511.8" font-size="21.0" fill="#fff" letter-spacing="-0.90" font-family="DejaVu Sans, Liberation Sans, sans-serif">5.5%</text>
<rect x="140.0" y="541.6" width="517.5" height="1.6" fill="#f0f0f0"/>
<text x="148.6" y="588.5" font-size="21.0" fill="#ffffff" letter-spacing="-0.25" font-family="DejaVu Sans, Liberation Sans, sans-serif">Estimated printing time [Normal mode]:</text>
<text x="578.4" y="588.5" font-size="21.0" fill="#ffffff" letter-spacing="-0.25" font-family="DejaVu Sans, Liberation Sans, sans-serif">8h56m</text>
<rect x="148.0" y="608.0" width="214.6" height="41.3" fill="#c46832"/>
<text x="156.4" y="637.5" font-size="21.0" fill="#ffffff" letter-spacing="-0.25" font-family="DejaVu Sans, Liberation Sans, sans-serif">Show stealth mode</text>
<path d="M132 1502.4 H401 a9 9 0 0 1 9 9 V1650 H132Z" fill="#464646"/>
<rect x="271.8" y="1511.5" width="128.4" height="128.4" fill="#222222"/>
<g fill="none" stroke="#fff" stroke-width="3.1" stroke-linejoin="round" transform="translate(0 0.8)"><path d="M150.5 1550.5 H232.5 V1632 H150.5Z M150.5 1550.5 L183 1520 H262 L232.5 1550.5 M262 1520 V1602 L232.5 1632"/></g>
<g fill="none" stroke="#fff" stroke-width="3" stroke-linejoin="round" stroke-linecap="round" transform="translate(0 0.8)"><path d="M280 1551 L313 1522 H392 L362 1551Z"/><path d="M280 1561.1 H362 L392 1532.1"/><path d="M280 1571.2 H362 L392 1542.2"/><path d="M280 1581.3 H362 L392 1552.3"/><path d="M280 1591.4 H362 L392 1562.4"/><path d="M280 1601.5 H362 L392 1572.5"/><path d="M280 1611.6 H362 L392 1582.6"/><path d="M280 1621.7 H362 L392 1592.7"/><path d="M280 1631.8 H362 L392 1602.8"/></g>
<path d="M1159.7 1530.3 H1891 a9 9 0 0 1 9 9 V1650 H1150.7 V1539.3 a9 9 0 0 1 9 -9Z" fill="#343434" fill-opacity="0.96" stroke="#45454c" stroke-width="1.2"/>
<text x="1180.4" y="1569.3" font-size="21.0" fill="#ffffff" letter-spacing="-0.25" font-family="DejaVu Sans, Liberation Sans, sans-serif">Exporting finished.</text>
<text x="1393.8" y="1569.3" font-size="21.0" fill="#ed6b21" letter-spacing="-0.25" font-family="DejaVu Sans, Liberation Sans, sans-serif" text-decoration="underline">Open Folder.</text>
<text x="1180.4" y="1599.2" font-size="21.0" fill="#fff" letter-spacing="-0.10" font-family="DejaVu Sans, Liberation Sans, sans-serif">/Users/vk/Downloads/ srieginis karolis Elzei v3/single pipe</text>
<text x="1180.4" y="1629.0" font-size="21.0" fill="#fff" letter-spacing="-0.25" font-family="DejaVu Sans, Liberation Sans, sans-serif">towel hook_0.1mm_PETG_MK3S_8h56m.gcode</text>
<rect x="1833.0" y="1564.3" width="51.0" height="51.0" fill="none" rx="6.0" stroke="#ed6b21" stroke-width="3.4"/>
<path d="M1846 1577.5 L1871 1602.5 M1871 1577.5 L1846 1602.5" stroke="#ed6b21" stroke-width="6.4" stroke-linecap="round"/>
<text x="146.2" y="1707.5" font-size="23.5" fill="#e2e2e2" stroke="#e2e2e2" stroke-width="0.3">View</text>
<rect x="210.0" y="1678.3" width="263.7" height="40.0" fill="#656565" rx="10.0"/>
<rect x="437.6" y="1681.5" width="33.0" height="33.3" fill="#2167de" rx="8.0"/>
<path d="M448.4 1693.6 l5.7 -5.6 l5.7 5.6 M448.4 1702.7 l5.7 5.6 l5.7 -5.6" fill="none" stroke="#fff" stroke-width="2.8" stroke-linecap="round" stroke-linejoin="round"/>
<text x="226.0" y="1706.0" font-size="23.5" fill="#f0f0f0" stroke="#f0f0f0" stroke-width="0.3">Feature type</text>
<text x="500.2" y="1707.5" font-size="23.5" fill="#e2e2e2" stroke="#e2e2e2" stroke-width="0.3">Show</text>
<rect x="572.8" y="1678.6" width="445.3" height="41.0" fill="#1e1e1e" stroke="#6a6a6a" stroke-width="1.6"/>
<text x="580.5" y="1708.0" font-size="23.5" fill="#e2e2e2" stroke="#e2e2e2" stroke-width="0.3">Options</text>
<rect x="1027.4" y="1680.0" width="39.6" height="39.6" fill="#ffffff" rx="10.0"/>
<path d="M1040.8 1697.2 l6.4 6.4 l6.4 -6.4" fill="none" stroke="#2b2b2b" stroke-width="3.3" stroke-linecap="round" stroke-linejoin="round"/>
<rect x="1107.0" y="1696.8" width="776.0" height="6.2" fill="url(#htrk)"/>
<path d="M1108.1 1685.8 V1714.1 H1101.9 L1093 1699.9 L1101.9 1685.8Z" fill="#ed6b21" stroke="#fff" stroke-width="2"/>
<path d="M1881.8 1685.8 V1714.1 H1888 L1896.9 1699.9 L1888 1685.8Z" fill="#ed6b21" stroke="#fff" stroke-width="2"/>
<text x="1879.0" y="1678.3" font-size="23.0" fill="#e2e2e2" text-anchor="end" letter-spacing="0.70" stroke="#e2e2e2" stroke-width="0.3">629674</text>
<text x="1110.0" y="1740.4" font-size="23.0" fill="#e2e2e2" letter-spacing="0.70" stroke="#e2e2e2" stroke-width="0.3">628393</text>
<rect x="2017.1" y="225.0" width="5.8" height="255.0" fill="url(#trk)"/>
<rect x="2017.1" y="478.0" width="5.8" height="1213.0" fill="url(#otrk)"/>
<path d="M1997.3 231 H2003 M2037 231 H2043 M1997.3 236 H2003 M2037 236 H2043 M1997.3 240 H2003 M2037 240 H2043 M1997.3 245 H2003 M2037 245 H2043 M1997.3 250 H2003 M2037 250 H2043 M1997.3 255 H2003 M2037 255 H2043 M1997.3 260 H2003 M2037 260 H2043 M1997.3 265 H2003 M2037 265 H2043 M1997.3 270 H2003 M2037 270 H2043 M1997.3 280 H2003 M2037 280 H2043 M1997.3 285 H2003 M2037 285 H2043 M1997.3 289 H2003 M2037 289 H2043 M1997.3 294 H2003 M2037 294 H2043 M1997.3 299 H2003 M2037 299 H2043 M1997.3 304 H2003 M2037 304 H2043 M1997.3 309 H2003 M2037 309 H2043 M1997.3 314 H2003 M2037 314 H2043 M1997.3 319 H2003 M2037 319 H2043 M1997.3 329 H2003 M2037 329 H2043 M1997.3 334 H2003 M2037 334 H2043 M1997.3 338 H2003 M2037 338 H2043 M1997.3 343 H2003 M2037 343 H2043 M1997.3 348 H2003 M2037 348 H2043 M1997.3 353 H2003 M2037 353 H2043 M1997.3 358 H2003 M2037 358 H2043 M1997.3 363 H2003 M2037 363 H2043 M1997.3 368 H2003 M2037 368 H2043 M1997.3 378 H2003 M2037 378 H2043 M1997.3 383 H2003 M2037 383 H2043 M1997.3 387 H2003 M2037 387 H2043 M1997.3 392 H2003 M2037 392 H2043 M1997.3 397 H2003 M2037 397 H2043 M1997.3 402 H2003 M2037 402 H2043 M1997.3 407 H2003 M2037 407 H2043 M1997.3 412 H2003 M2037 412 H2043 M1997.3 417 H2003 M2037 417 H2043 M1997.3 427 H2003 M2037 427 H2043 M1997.3 432 H2003 M2037 432 H2043 M1997.3 436 H2003 M2037 436 H2043 M1997.3 441 H2003 M2037 441 H2043 M1997.3 446 H2003 M2037 446 H2043 M1997.3 451 H2003 M2037 451 H2043 M1997.3 456 H2003 M2037 456 H2043 M1997.3 461 H2003 M2037 461 H2043 M1997.3 466 H2003 M2037 466 H2043 M1997.3 476 H2003 M2037 476 H2043 M1997.3 480 H2003 M2037 480 H2043 M1997.3 485 H2003 M2037 485 H2043 M1997.3 490 H2003 M2037 490 H2043 M1997.3 495 H2003 M2037 495 H2043 M1997.3 500 H2003 M2037 500 H2043 M1997.3 505 H2003 M2037 505 H2043 M1997.3 510 H2003 M2037 510 H2043 M1997.3 515 H2003 M2037 515 H2043 M1997.3 525 H2003 M2037 525 H2043 M1997.3 529 H2003 M2037 529 H2043 M1997.3 534 H2003 M2037 534 H2043 M1997.3 539 H2003 M2037 539 H2043 M1997.3 544 H2003 M2037 544 H2043 M1997.3 549 H2003 M2037 549 H2043 M1997.3 554 H2003 M2037 554 H2043 M1997.3 559 H2003 M2037 559 H2043 M1997.3 564 H2003 M2037 564 H2043 M1997.3 574 H2003 M2037 574 H2043 M1997.3 578 H2003 M2037 578 H2043 M1997.3 583 H2003 M2037 583 H2043 M1997.3 588 H2003 M2037 588 H2043 M1997.3 593 H2003 M2037 593 H2043 M1997.3 598 H2003 M2037 598 H2043 M1997.3 603 H2003 M2037 603 H2043 M1997.3 608 H2003 M2037 608 H2043 M1997.3 613 H2003 M2037 613 H2043 M1997.3 623 H2003 M2037 623 H2043 M1997.3 627 H2003 M2037 627 H2043 M1997.3 632 H2003 M2037 632 H2043 M1997.3 637 H2003 M2037 637 H2043 M1997.3 642 H2003 M2037 642 H2043 M1997.3 647 H2003 M2037 647 H2043 M1997.3 652 H2003 M2037 652 H2043 M1997.3 657 H2003 M2037 657 H2043 M1997.3 662 H2003 M2037 662 H2043 M1997.3 672 H2003 M2037 672 H2043 M1997.3 676 H2003 M2037 676 H2043 M1997.3 681 H2003 M2037 681 H2043 M1997.3 686 H2003 M2037 686 H2043 M1997.3 691 H2003 M2037 691 H2043 M1997.3 696 H2003 M2037 696 H2043 M1997.3 701 H2003 M2037 701 H2043 M1997.3 706 H2003 M2037 706 H2043 M1997.3 711 H2003 M2037 711 H2043 M1997.3 720 H2003 M2037 720 H2043 M1997.3 725 H2003 M2037 725 H2043 M1997.3 730 H2003 M2037 730 H2043 M1997.3 735 H2003 M2037 735 H2043 M1997.3 740 H2003 M2037 740 H2043 M1997.3 745 H2003 M2037 745 H2043 M1997.3 750 H2003 M2037 750 H2043 M1997.3 755 H2003 M2037 755 H2043 M1997.3 760 H2003 M2037 760 H2043 M1997.3 769 H2003 M2037 769 H2043 M1997.3 774 H2003 M2037 774 H2043 M1997.3 779 H2003 M2037 779 H2043 M1997.3 784 H2003 M2037 784 H2043 M1997.3 789 H2003 M2037 789 H2043 M1997.3 794 H2003 M2037 794 H2043 M1997.3 799 H2003 M2037 799 H2043 M1997.3 804 H2003 M2037 804 H2043 M1997.3 809 H2003 M2037 809 H2043 M1997.3 818 H2003 M2037 818 H2043 M1997.3 823 H2003 M2037 823 H2043 M1997.3 828 H2003 M2037 828 H2043 M1997.3 833 H2003 M2037 833 H2043 M1997.3 838 H2003 M2037 838 H2043 M1997.3 843 H2003 M2037 843 H2043 M1997.3 848 H2003 M2037 848 H2043 M1997.3 853 H2003 M2037 853 H2043 M1997.3 858 H2003 M2037 858 H2043 M1997.3 867 H2003 M2037 867 H2043 M1997.3 872 H2003 M2037 872 H2043 M1997.3 877 H2003 M2037 877 H2043 M1997.3 882 H2003 M2037 882 H2043 M1997.3 887 H2003 M2037 887 H2043 M1997.3 892 H2003 M2037 892 H2043 M1997.3 897 H2003 M2037 897 H2043 M1997.3 902 H2003 M2037 902 H2043 M1997.3 907 H2003 M2037 907 H2043 M1997.3 916 H2003 M2037 916 H2043 M1997.3 921 H2003 M2037 921 H2043 M1997.3 926 H2003 M2037 926 H2043 M1997.3 931 H2003 M2037 931 H2043 M1997.3 936 H2003 M2037 936 H2043 M1997.3 941 H2003 M2037 941 H2043 M1997.3 946 H2003 M2037 946 H2043 M1997.3 951 H2003 M2037 951 H2043 M1997.3 956 H2003 M2037 956 H2043 M1997.3 965 H2003 M2037 965 H2043 M1997.3 970 H2003 M2037 970 H2043 M1997.3 975 H2003 M2037 975 H2043 M1997.3 980 H2003 M2037 980 H2043 M1997.3 985 H2003 M2037 985 H2043 M1997.3 990 H2003 M2037 990 H2043 M1997.3 995 H2003 M2037 995 H2043 M1997.3 1000 H2003 M2037 1000 H2043 M1997.3 1005 H2003 M2037 1005 H2043 M1997.3 1014 H2003 M2037 1014 H2043 M1997.3 1019 H2003 M2037 1019 H2043 M1997.3 1024 H2003 M2037 1024 H2043 M1997.3 1029 H2003 M2037 1029 H2043 M1997.3 1034 H2003 M2037 1034 H2043 M1997.3 1039 H2003 M2037 1039 H2043 M1997.3 1044 H2003 M2037 1044 H2043 M1997.3 1049 H2003 M2037 1049 H2043 M1997.3 1054 H2003 M2037 1054 H2043 M1997.3 1063 H2003 M2037 1063 H2043 M1997.3 1068 H2003 M2037 1068 H2043 M1997.3 1073 H2003 M2037 1073 H2043 M1997.3 1078 H2003 M2037 1078 H2043 M1997.3 1083 H2003 M2037 1083 H2043 M1997.3 1088 H2003 M2037 1088 H2043 M1997.3 1093 H2003 M2037 1093 H2043 M1997.3 1098 H2003 M2037 1098 H2043 M1997.3 1103 H2003 M2037 1103 H2043 M1997.3 1112 H2003 M2037 1112 H2043 M1997.3 1117 H2003 M2037 1117 H2043 M1997.3 1122 H2003 M2037 1122 H2043 M1997.3 1127 H2003 M2037 1127 H2043 M1997.3 1132 H2003 M2037 1132 H2043 M1997.3 1137 H2003 M2037 1137 H2043 M1997.3 1142 H2003 M2037 1142 H2043 M1997.3 1147 H2003 M2037 1147 H2043 M1997.3 1152 H2003 M2037 1152 H2043 M1997.3 1161 H2003 M2037 1161 H2043 M1997.3 1166 H2003 M2037 1166 H2043 M1997.3 1171 H2003 M2037 1171 H2043 M1997.3 1176 H2003 M2037 1176 H2043 M1997.3 1181 H2003 M2037 1181 H2043 M1997.3 1186 H2003 M2037 1186 H2043 M1997.3 1191 H2003 M2037 1191 H2043 M1997.3 1196 H2003 M2037 1196 H2043 M1997.3 1201 H2003 M2037 1201 H2043 M1997.3 1210 H2003 M2037 1210 H2043 M1997.3 1215 H2003 M2037 1215 H2043 M1997.3 1220 H2003 M2037 1220 H2043 M1997.3 1225 H2003 M2037 1225 H2043 M1997.3 1230 H2003 M2037 1230 H2043 M1997.3 1235 H2003 M2037 1235 H2043 M1997.3 1240 H2003 M2037 1240 H2043 M1997.3 1245 H2003 M2037 1245 H2043 M1997.3 1249 H2003 M2037 1249 H2043 M1997.3 1259 H2003 M2037 1259 H2043 M1997.3 1264 H2003 M2037 1264 H2043 M1997.3 1269 H2003 M2037 1269 H2043 M1997.3 1274 H2003 M2037 1274 H2043 M1997.3 1279 H2003 M2037 1279 H2043 M1997.3 1284 H2003 M2037 1284 H2043 M1997.3 1289 H2003 M2037 1289 H2043 M1997.3 1294 H2003 M2037 1294 H2043 M1997.3 1298 H2003 M2037 1298 H2043 M1997.3 1308 H2003 M2037 1308 H2043 M1997.3 1313 H2003 M2037 1313 H2043 M1997.3 1318 H2003 M2037 1318 H2043 M1997.3 1323 H2003 M2037 1323 H2043 M1997.3 1328 H2003 M2037 1328 H2043 M1997.3 1333 H2003 M2037 1333 H2043 M1997.3 1338 H2003 M2037 1338 H2043 M1997.3 1343 H2003 M2037 1343 H2043 M1997.3 1347 H2003 M2037 1347 H2043 M1997.3 1357 H2003 M2037 1357 H2043 M1997.3 1362 H2003 M2037 1362 H2043 M1997.3 1367 H2003 M2037 1367 H2043 M1997.3 1372 H2003 M2037 1372 H2043 M1997.3 1377 H2003 M2037 1377 H2043 M1997.3 1382 H2003 M2037 1382 H2043 M1997.3 1387 H2003 M2037 1387 H2043 M1997.3 1392 H2003 M2037 1392 H2043 M1997.3 1396 H2003 M2037 1396 H2043 M1997.3 1406 H2003 M2037 1406 H2043 M1997.3 1411 H2003 M2037 1411 H2043 M1997.3 1416 H2003 M2037 1416 H2043 M1997.3 1421 H2003 M2037 1421 H2043 M1997.3 1426 H2003 M2037 1426 H2043 M1997.3 1431 H2003 M2037 1431 H2043 M1997.3 1436 H2003 M2037 1436 H2043 M1997.3 1441 H2003 M2037 1441 H2043 M1997.3 1445 H2003 M2037 1445 H2043 M1997.3 1455 H2003 M2037 1455 H2043 M1997.3 1460 H2003 M2037 1460 H2043 M1997.3 1465 H2003 M2037 1465 H2043 M1997.3 1470 H2003 M2037 1470 H2043 M1997.3 1475 H2003 M2037 1475 H2043 M1997.3 1480 H2003 M2037 1480 H2043 M1997.3 1485 H2003 M2037 1485 H2043 M1997.3 1489 H2003 M2037 1489 H2043 M1997.3 1494 H2003 M2037 1494 H2043 M1997.3 1504 H2003 M2037 1504 H2043 M1997.3 1509 H2003 M2037 1509 H2043 M1997.3 1514 H2003 M2037 1514 H2043 M1997.3 1519 H2003 M2037 1519 H2043 M1997.3 1524 H2003 M2037 1524 H2043 M1997.3 1529 H2003 M2037 1529 H2043 M1997.3 1534 H2003 M2037 1534 H2043 M1997.3 1538 H2003 M2037 1538 H2043 M1997.3 1543 H2003 M2037 1543 H2043 M1997.3 1553 H2003 M2037 1553 H2043 M1997.3 1558 H2003 M2037 1558 H2043 M1997.3 1563 H2003 M2037 1563 H2043 M1997.3 1568 H2003 M2037 1568 H2043 M1997.3 1573 H2003 M2037 1573 H2043 M1997.3 1578 H2003 M2037 1578 H2043 M1997.3 1583 H2003 M2037 1583 H2043 M1997.3 1587 H2003 M2037 1587 H2043 M1997.3 1592 H2003 M2037 1592 H2043 M1997.3 1602 H2003 M2037 1602 H2043 M1997.3 1607 H2003 M2037 1607 H2043 M1997.3 1612 H2003 M2037 1612 H2043 M1997.3 1617 H2003 M2037 1617 H2043 M1997.3 1622 H2003 M2037 1622 H2043 M1997.3 1627 H2003 M2037 1627 H2043 M1997.3 1632 H2003 M2037 1632 H2043 M1997.3 1636 H2003 M2037 1636 H2043 M1997.3 1641 H2003 M2037 1641 H2043 M1997.3 1651 H2003 M2037 1651 H2043 M1997.3 1656 H2003 M2037 1656 H2043 M1997.3 1661 H2003 M2037 1661 H2043 M1997.3 1666 H2003 M2037 1666 H2043 M1997.3 1671 H2003 M2037 1671 H2043 M1997.3 1676 H2003 M2037 1676 H2043 M1997.3 1681 H2003 M2037 1681 H2043 M1997.3 1685 H2003 M2037 1685 H2043 M1997.3 1690 H2003 M2037 1690 H2043 M1991.2 226 H2003 M2037 226 H2049 M1991.2 275 H2003 M2037 275 H2049 M1991.2 324 H2003 M2037 324 H2049 M1991.2 373 H2003 M2037 373 H2049 M1991.2 422 H2003 M2037 422 H2049 M1991.2 471 H2003 M2037 471 H2049 M1991.2 520 H2003 M2037 520 H2049 M1991.2 569 H2003 M2037 569 H2049 M1991.2 618 H2003 M2037 618 H2049 M1991.2 667 H2003 M2037 667 H2049 M1991.2 716 H2003 M2037 716 H2049 M1991.2 765 H2003 M2037 765 H2049 M1991.2 814 H2003 M2037 814 H2049 M1991.2 863 H2003 M2037 863 H2049 M1991.2 912 H2003 M2037 912 H2049 M1991.2 960 H2003 M2037 960 H2049 M1991.2 1009 H2003 M2037 1009 H2049 M1991.2 1058 H2003 M2037 1058 H2049 M1991.2 1107 H2003 M2037 1107 H2049 M1991.2 1156 H2003 M2037 1156 H2049 M1991.2 1205 H2003 M2037 1205 H2049 M1991.2 1254 H2003 M2037 1254 H2049 M1991.2 1303 H2003 M2037 1303 H2049 M1991.2 1352 H2003 M2037 1352 H2049 M1991.2 1401 H2003 M2037 1401 H2049 M1991.2 1450 H2003 M2037 1450 H2049 M1991.2 1499 H2003 M2037 1499 H2049 M1991.2 1548 H2003 M2037 1548 H2049 M1991.2 1597 H2003 M2037 1597 H2049 M1991.2 1646 H2003 M2037 1646 H2049" stroke="#b9b9b9" stroke-width="2" fill="none"/>
<text x="2054.7" y="231.7" font-size="22.0" fill="#a9a9a9" letter-spacing="0.70" stroke="#a9a9a9" stroke-width="0.3">20.00</text>
<text x="2054.7" y="280.7" font-size="22.0" fill="#a9a9a9" letter-spacing="0.70" stroke="#a9a9a9" stroke-width="0.3">18.00</text>
<text x="2054.7" y="329.7" font-size="22.0" fill="#a9a9a9" letter-spacing="0.70" stroke="#a9a9a9" stroke-width="0.3">16.00</text>
<text x="2054.7" y="378.6" font-size="22.0" fill="#a9a9a9" letter-spacing="0.70" stroke="#a9a9a9" stroke-width="0.3">14.00</text>
<text x="2054.7" y="427.6" font-size="22.0" fill="#a9a9a9" letter-spacing="0.70" stroke="#a9a9a9" stroke-width="0.3">12.00</text>
<text x="2054.7" y="476.6" font-size="22.0" fill="#a9a9a9" letter-spacing="0.70" stroke="#a9a9a9" stroke-width="0.3">10.00</text>
<text x="2054.7" y="525.6" font-size="22.0" fill="#a9a9a9" letter-spacing="0.70" stroke="#a9a9a9" stroke-width="0.3">8.00</text>
<text x="2054.7" y="574.6" font-size="22.0" fill="#a9a9a9" letter-spacing="0.70" stroke="#a9a9a9" stroke-width="0.3">6.00</text>
<text x="2054.7" y="623.5" font-size="22.0" fill="#a9a9a9" letter-spacing="0.70" stroke="#a9a9a9" stroke-width="0.3">4.00</text>
<text x="2054.7" y="672.5" font-size="22.0" fill="#a9a9a9" letter-spacing="0.70" stroke="#a9a9a9" stroke-width="0.3">2.00</text>
<text x="2054.7" y="721.5" font-size="22.0" fill="#a9a9a9" letter-spacing="0.70" stroke="#a9a9a9" stroke-width="0.3">20.00</text>
<text x="2054.7" y="770.5" font-size="22.0" fill="#a9a9a9" letter-spacing="0.70" stroke="#a9a9a9" stroke-width="0.3">18.00</text>
<text x="2054.7" y="819.5" font-size="22.0" fill="#a9a9a9" letter-spacing="0.70" stroke="#a9a9a9" stroke-width="0.3">16.00</text>
<text x="2054.7" y="868.4" font-size="22.0" fill="#a9a9a9" letter-spacing="0.70" stroke="#a9a9a9" stroke-width="0.3">14.00</text>
<text x="2054.7" y="917.4" font-size="22.0" fill="#a9a9a9" letter-spacing="0.70" stroke="#a9a9a9" stroke-width="0.3">12.00</text>
<text x="2054.7" y="966.4" font-size="22.0" fill="#a9a9a9" letter-spacing="0.70" stroke="#a9a9a9" stroke-width="0.3">10.00</text>
<text x="2054.7" y="1015.4" font-size="22.0" fill="#a9a9a9" letter-spacing="0.70" stroke="#a9a9a9" stroke-width="0.3">8.00</text>
<text x="2054.7" y="1064.4" font-size="22.0" fill="#a9a9a9" letter-spacing="0.70" stroke="#a9a9a9" stroke-width="0.3">6.00</text>
<text x="2054.7" y="1113.3" font-size="22.0" fill="#a9a9a9" letter-spacing="0.70" stroke="#a9a9a9" stroke-width="0.3">4.00</text>
<text x="2054.7" y="1162.3" font-size="22.0" fill="#a9a9a9" letter-spacing="0.70" stroke="#a9a9a9" stroke-width="0.3">2.00</text>
<text x="2054.7" y="1211.3" font-size="22.0" fill="#a9a9a9" letter-spacing="0.70" stroke="#a9a9a9" stroke-width="0.3">20.00</text>
<text x="2054.7" y="1260.3" font-size="22.0" fill="#a9a9a9" letter-spacing="0.70" stroke="#a9a9a9" stroke-width="0.3">18.00</text>
<text x="2054.7" y="1309.3" font-size="22.0" fill="#a9a9a9" letter-spacing="0.70" stroke="#a9a9a9" stroke-width="0.3">16.00</text>
<text x="2054.7" y="1358.2" font-size="22.0" fill="#a9a9a9" letter-spacing="0.70" stroke="#a9a9a9" stroke-width="0.3">14.00</text>
<text x="2054.7" y="1407.2" font-size="22.0" fill="#a9a9a9" letter-spacing="0.70" stroke="#a9a9a9" stroke-width="0.3">12.00</text>
<text x="2054.7" y="1456.2" font-size="22.0" fill="#a9a9a9" letter-spacing="0.70" stroke="#a9a9a9" stroke-width="0.3">10.00</text>
<text x="2054.7" y="1505.2" font-size="22.0" fill="#a9a9a9" letter-spacing="0.70" stroke="#a9a9a9" stroke-width="0.3">8.00</text>
<text x="2054.7" y="1554.2" font-size="22.0" fill="#a9a9a9" letter-spacing="0.70" stroke="#a9a9a9" stroke-width="0.3">6.00</text>
<text x="2054.7" y="1603.1" font-size="22.0" fill="#a9a9a9" letter-spacing="0.70" stroke="#a9a9a9" stroke-width="0.3">4.00</text>
<text x="2054.7" y="1652.1" font-size="22.0" fill="#a9a9a9" letter-spacing="0.70" stroke="#a9a9a9" stroke-width="0.3">2.00</text>
<text x="2054.7" y="1684.4" font-size="22.0" fill="#f0f0f0" letter-spacing="0.70" stroke="#f0f0f0" stroke-width="0.3">0.20</text>
<text x="2054.7" y="1710.8" font-size="22.0" fill="#f0f0f0" letter-spacing="0.70" stroke="#f0f0f0" stroke-width="0.3">(1)</text>
<text x="1926.5" y="479.2" font-size="22.0" fill="#f0f0f0" letter-spacing="0.70" stroke="#f0f0f0" stroke-width="0.3">9.60</text>
<text x="1926.5" y="505.2" font-size="22.0" fill="#f0f0f0" letter-spacing="0.70" stroke="#f0f0f0" stroke-width="0.3">(493)</text>
<rect x="1987.4" y="481.0" width="65.0" height="1.8" fill="#ed6b21"/>
<path d="M2005.3 481.8 V474.2 L2020 465 L2034.7 474.2 V481.8Z" fill="#ed6b21"/><path d="M2006.2 481 V474.7 L2020 466 L2033.8 474.7 V481" fill="none" stroke="#fff" stroke-width="2"/>
<path d="M2005.3 1689.1 V1696.6 L2020.2 1706.4 L2035.2 1696.6 V1689.1Z" fill="#ed6b21"/><path d="M2006.3 1690.1 H2034.2 V1696.1 L2020.2 1705.2 L2006.3 1696.1Z" fill="none" stroke="#fff" stroke-width="2"/>
<path d="M2012.3 1730 V1723.4 a5.4 5.4 0 0 1 5.4 -5.4 h4.6 a5.4 5.4 0 0 1 5.4 5.4 V1725" fill="none" stroke="#ed6b21" stroke-width="4.3"/>
<rect x="2008.0" y="1729.6" width="24.0" height="14.4" fill="#ed6b21" rx="2.4"/>
<circle cx="2018.6" cy="1737" r="2.7" fill="#323232"/><rect x="2019" y="1736" width="5" height="1.8" fill="#323232"/>
<path d="M2107.26 1718.96 L2107.88 1716.72 L2111.52 1716.72 L2112.14 1718.96 L2115.99 1720.55 L2118.01 1719.41 L2120.59 1721.99 L2119.45 1724.01 L2121.04 1727.86 L2123.28 1728.48 L2123.28 1732.12 L2121.04 1732.74 L2119.45 1736.59 L2120.59 1738.61 L2118.01 1741.19 L2115.99 1740.05 L2112.14 1741.64 L2111.52 1743.88 L2107.88 1743.88 L2107.26 1741.64 L2103.41 1740.05 L2101.39 1741.19 L2098.81 1738.61 L2099.95 1736.59 L2098.36 1732.74 L2096.12 1732.12 L2096.12 1728.48 L2098.36 1727.86 L2099.95 1724.01 L2098.81 1721.99 L2101.39 1719.41 L2103.41 1720.55Z" fill="#fff" stroke="#fff" stroke-width="1.5" stroke-linejoin="round"/>
<circle cx="2109.7" cy="1730.3" r="10.2" fill="#323232"/>
<path d="M2108.52 1723.40 L2108.85 1722.35 L2110.55 1722.35 L2110.88 1723.40 L2112.80 1724.02 L2113.69 1723.36 L2115.07 1724.37 L2114.71 1725.41 L2115.90 1727.04 L2117.00 1727.03 L2117.53 1728.65 L2116.63 1729.29 L2116.63 1731.31 L2117.53 1731.95 L2117.00 1733.57 L2115.90 1733.56 L2114.71 1735.19 L2115.07 1736.23 L2113.69 1737.24 L2112.80 1736.58 L2110.88 1737.20 L2110.55 1738.25 L2108.85 1738.25 L2108.52 1737.20 L2106.60 1736.58 L2105.71 1737.24 L2104.33 1736.23 L2104.69 1735.19 L2103.50 1733.56 L2102.40 1733.57 L2101.87 1731.95 L2102.77 1731.31 L2102.77 1729.29 L2101.87 1728.65 L2102.40 1727.03 L2103.50 1727.04 L2104.69 1725.41 L2104.33 1724.37 L2105.71 1723.36 L2106.60 1724.02Z" fill="#ed6b21" stroke="#ed6b21" stroke-width="0.8" stroke-linejoin="round"/>
<circle cx="2109.7" cy="1730.3" r="5.4" fill="#323232"/>
<rect x="2130.0" y="198.0" width="844.0" height="1553.0" fill="#373737"/>
<rect x="2340.3" y="203.8" width="118.7" height="32.0" fill="#686868" rx="8.5"/>
<polygon points="2358.3,210.5 2366.4,215.2 2366.4,224.5 2358.3,229.1 2350.2,224.5 2350.2,215.2" fill="#7be63a"/>
<polygon points="2358.3,210.5 2366.4,215.2 2366.4,224.5 2358.3,229.1 2358.3,219.8" fill="#62cf2a"/>
<text x="2376.8" y="228.0" font-size="23.5" fill="#555555" letter-spacing="-0.30" stroke="#555555" stroke-width="0.3">Simple</text>
<rect x="2472.6" y="203.8" width="150.7" height="32.0" fill="#686868" rx="8.5"/>
<polygon points="2490.6,210.5 2498.7,215.2 2498.7,224.5 2490.6,229.1 2482.5,224.5 2482.5,215.2" fill="#ffd500"/>
<polygon points="2490.6,210.5 2498.7,215.2 2498.7,224.5 2490.6,229.1 2490.6,219.8" fill="#f5c400"/>
<text x="2509.1" y="228.0" font-size="23.5" fill="#555555" letter-spacing="-0.30" stroke="#555555" stroke-width="0.3">Advanced</text>
<rect x="2636.3" y="203.8" width="120.7" height="32.0" fill="#686868" rx="8.5"/>
<polygon points="2654.3,210.5 2662.4,215.2 2662.4,224.5 2654.3,229.1 2646.2,224.5 2646.2,215.2" fill="#e80000"/>
<polygon points="2654.3,210.5 2662.4,215.2 2662.4,224.5 2654.3,229.1 2654.3,219.8" fill="#c80000"/>
<text x="2672.8" y="228.0" font-size="23.5" fill="#f4f4f4" font-weight="bold">Expert</text>
<text x="2145.0" y="265.6" font-size="22.5" fill="#e2e2e2" letter-spacing="0.25" stroke="#e2e2e2" stroke-width="0.5">Print settings :</text>
<rect x="2140.6" y="280.4" width="733.7" height="41.4" fill="#1e1e1e" stroke="#757575" stroke-width="2.0"/>
<path d="M2171.56 290.66 L2172.18 288.42 L2175.82 288.42 L2176.44 290.66 L2180.29 292.25 L2182.31 291.11 L2184.89 293.69 L2183.75 295.71 L2185.34 299.56 L2187.58 300.18 L2187.58 303.82 L2185.34 304.44 L2183.75 308.29 L2184.89 310.31 L2182.31 312.89 L2180.29 311.75 L2176.44 313.34 L2175.82 315.58 L2172.18 315.58 L2171.56 313.34 L2167.71 311.75 L2165.69 312.89 L2163.11 310.31 L2164.25 308.29 L2162.66 304.44 L2160.42 303.82 L2160.42 300.18 L2162.66 299.56 L2164.25 295.71 L2163.11 293.69 L2165.69 291.11 L2167.71 292.25Z" fill="#fff" stroke="#fff" stroke-width="1.5" stroke-linejoin="round"/>
<circle cx="2174.0" cy="302.0" r="10.2" fill="#1e1e1e"/>
<path d="M2172.82 295.10 L2173.15 294.05 L2174.85 294.05 L2175.18 295.10 L2177.10 295.72 L2177.99 295.06 L2179.37 296.07 L2179.01 297.11 L2180.20 298.74 L2181.30 298.73 L2181.83 300.35 L2180.93 300.99 L2180.93 303.01 L2181.83 303.65 L2181.30 305.27 L2180.20 305.26 L2179.01 306.89 L2179.37 307.93 L2177.99 308.94 L2177.10 308.28 L2175.18 308.90 L2174.85 309.95 L2173.15 309.95 L2172.82 308.90 L2170.90 308.28 L2170.01 308.94 L2168.63 307.93 L2168.99 306.89 L2167.80 305.26 L2166.70 305.27 L2166.17 303.65 L2167.07 303.01 L2167.07 300.99 L2166.17 300.35 L2166.70 298.73 L2167.80 298.74 L2168.99 297.11 L2168.63 296.07 L2170.01 295.06 L2170.90 295.72Z" fill="#ed6b21" stroke="#ed6b21" stroke-width="0.8" stroke-linejoin="round"/>
<circle cx="2174.0" cy="302.0" r="5.4" fill="#1e1e1e"/>
<path d="M2210.6 303.0 V295.3 a5.2 5.2 0 0 1 5.2 -5.2 h4.4 a5.2 5.2 0 0 1 5.2 5.2 V303.0" fill="none" stroke="#fff" stroke-width="4.1"/>
<rect x="2206.0" y="301.8" width="24" height="14.4" rx="2.4" fill="#fff"/>
<circle cx="2216.6" cy="309.4" r="2.7" fill="#1e1e1e"/><rect x="2217.0" y="308.3" width="5" height="1.8" fill="#1e1e1e"/>
<text x="2244.7" y="310.2" font-size="23.0" fill="#e2e2e2" letter-spacing="0.05" stroke="#e2e2e2" stroke-width="0.3">0.10mm DETAIL (modified)</text>
<rect x="2882.8" y="281.6" width="40.4" height="40.4" fill="#ffffff" rx="10.0"/>
<path d="M2896.6 299.2 l6.4 6.4 l6.4 -6.4" fill="none" stroke="#2b2b2b" stroke-width="3.3" stroke-linecap="round" stroke-linejoin="round"/>
<path d="M2945.56 290.66 L2946.18 288.42 L2949.82 288.42 L2950.44 290.66 L2954.29 292.25 L2956.31 291.11 L2958.89 293.69 L2957.75 295.71 L2959.34 299.56 L2961.58 300.18 L2961.58 303.82 L2959.34 304.44 L2957.75 308.29 L2958.89 310.31 L2956.31 312.89 L2954.29 311.75 L2950.44 313.34 L2949.82 315.58 L2946.18 315.58 L2945.56 313.34 L2941.71 311.75 L2939.69 312.89 L2937.11 310.31 L2938.25 308.29 L2936.66 304.44 L2934.42 303.82 L2934.42 300.18 L2936.66 299.56 L2938.25 295.71 L2937.11 293.69 L2939.69 291.11 L2941.71 292.25Z" fill="#fff" stroke="#fff" stroke-width="1.5" stroke-linejoin="round"/>
<circle cx="2948.0" cy="302.0" r="10.2" fill="#373737"/>
<path d="M2946.82 295.10 L2947.15 294.05 L2948.85 294.05 L2949.18 295.10 L2951.10 295.72 L2951.99 295.06 L2953.37 296.07 L2953.01 297.11 L2954.20 298.74 L2955.30 298.73 L2955.83 300.35 L2954.93 300.99 L2954.93 303.01 L2955.83 303.65 L2955.30 305.27 L2954.20 305.26 L2953.01 306.89 L2953.37 307.93 L2951.99 308.94 L2951.10 308.28 L2949.18 308.90 L2948.85 309.95 L2947.15 309.95 L2946.82 308.90 L2944.90 308.28 L2944.01 308.94 L2942.63 307.93 L2942.99 306.89 L2941.80 305.26 L2940.70 305.27 L2940.17 303.65 L2941.07 303.01 L2941.07 300.99 L2940.17 300.35 L2940.70 298.73 L2941.80 298.74 L2942.99 297.11 L2942.63 296.07 L2944.01 295.06 L2944.90 295.72Z" fill="#ed6b21" stroke="#ed6b21" stroke-width="0.8" stroke-linejoin="round"/>
<circle cx="2948.0" cy="302.0" r="5.4" fill="#373737"/>
<text x="2145.0" y="355.6" font-size="22.5" fill="#e2e2e2" letter-spacing="0.25" stroke="#e2e2e2" stroke-width="0.5">Filament :</text>
<rect x="2140.6" y="370.4" width="733.7" height="41.4" fill="#1e1e1e" stroke="#757575" stroke-width="2.0"/>
<rect x="2150.0" y="376.0" width="48.0" height="32.0" fill="#ff8000"/>
<path d="M2210.6 393.0 V385.3 a5.2 5.2 0 0 1 5.2 -5.2 h4.4 a5.2 5.2 0 0 1 5.2 5.2 V393.0" fill="none" stroke="#fff" stroke-width="4.1"/>
<rect x="2206.0" y="391.8" width="24" height="14.4" rx="2.4" fill="#fff"/>
<circle cx="2216.6" cy="399.4" r="2.7" fill="#1e1e1e"/><rect x="2217.0" y="398.3" width="5" height="1.8" fill="#1e1e1e"/>
<text x="2244.7" y="400.2" font-size="23.0" fill="#e2e2e2" letter-spacing="0.05" stroke="#e2e2e2" stroke-width="0.3">Prusament PETG</text>
<rect x="2882.8" y="371.6" width="40.4" height="40.4" fill="#ffffff" rx="10.0"/>
<path d="M2896.6 389.2 l6.4 6.4 l6.4 -6.4" fill="none" stroke="#2b2b2b" stroke-width="3.3" stroke-linecap="round" stroke-linejoin="round"/>
<path d="M2945.56 380.66 L2946.18 378.42 L2949.82 378.42 L2950.44 380.66 L2954.29 382.25 L2956.31 381.11 L2958.89 383.69 L2957.75 385.71 L2959.34 389.56 L2961.58 390.18 L2961.58 393.82 L2959.34 394.44 L2957.75 398.29 L2958.89 400.31 L2956.31 402.89 L2954.29 401.75 L2950.44 403.34 L2949.82 405.58 L2946.18 405.58 L2945.56 403.34 L2941.71 401.75 L2939.69 402.89 L2937.11 400.31 L2938.25 398.29 L2936.66 394.44 L2934.42 393.82 L2934.42 390.18 L2936.66 389.56 L2938.25 385.71 L2937.11 383.69 L2939.69 381.11 L2941.71 382.25Z" fill="#fff" stroke="#fff" stroke-width="1.5" stroke-linejoin="round"/>
<circle cx="2948.0" cy="392.0" r="10.2" fill="#373737"/>
<path d="M2946.82 385.10 L2947.15 384.05 L2948.85 384.05 L2949.18 385.10 L2951.10 385.72 L2951.99 385.06 L2953.37 386.07 L2953.01 387.11 L2954.20 388.74 L2955.30 388.73 L2955.83 390.35 L2954.93 390.99 L2954.93 393.01 L2955.83 393.65 L2955.30 395.27 L2954.20 395.26 L2953.01 396.89 L2953.37 397.93 L2951.99 398.94 L2951.10 398.28 L2949.18 398.90 L2948.85 399.95 L2947.15 399.95 L2946.82 398.90 L2944.90 398.28 L2944.01 398.94 L2942.63 397.93 L2942.99 396.89 L2941.80 395.26 L2940.70 395.27 L2940.17 393.65 L2941.07 393.01 L2941.07 390.99 L2940.17 390.35 L2940.70 388.73 L2941.80 388.74 L2942.99 387.11 L2942.63 386.07 L2944.01 385.06 L2944.90 385.72Z" fill="#ed6b21" stroke="#ed6b21" stroke-width="0.8" stroke-linejoin="round"/>
<circle cx="2948.0" cy="392.0" r="5.4" fill="#373737"/>
<text x="2145.0" y="445.3" font-size="22.5" fill="#e2e2e2" letter-spacing="0.25" stroke="#e2e2e2" stroke-width="0.5">Printer :</text>
<rect x="2140.6" y="460.4" width="733.7" height="41.4" fill="#1e1e1e" stroke="#757575" stroke-width="2.0"/>
<rect x="2161.0" y="469.3" width="26.0" height="25.0" fill="none" stroke="#fff" stroke-width="2.2"/>
<rect x="2160.0" y="492.0" width="28.0" height="3.6" fill="#fff"/>
<rect x="2161.0" y="475.5" width="26.0" height="2.0" fill="#fff"/>
<path d="M2164 474 h8 v6.8 l-4 2.8 l-4 -2.8z" fill="#ed6b21"/>
<path d="M2210.6 483.0 V475.3 a5.2 5.2 0 0 1 5.2 -5.2 h4.4 a5.2 5.2 0 0 1 5.2 5.2 V483.0" fill="none" stroke="#fff" stroke-width="4.1"/>
<rect x="2206.0" y="481.8" width="24" height="14.4" rx="2.4" fill="#fff"/>
<circle cx="2216.6" cy="489.4" r="2.7" fill="#1e1e1e"/><rect x="2217.0" y="488.3" width="5" height="1.8" fill="#1e1e1e"/>
<text x="2244.7" y="490.2" font-size="23.0" fill="#e2e2e2" letter-spacing="0.05" stroke="#e2e2e2" stroke-width="0.3">Original Prusa i3 MK3S &amp; MK3S+</text>
<rect x="2882.8" y="461.6" width="40.4" height="40.4" fill="#ffffff" rx="10.0"/>
<path d="M2896.6 479.2 l6.4 6.4 l6.4 -6.4" fill="none" stroke="#2b2b2b" stroke-width="3.3" stroke-linecap="round" stroke-linejoin="round"/>
<path d="M2945.56 470.66 L2946.18 468.42 L2949.82 468.42 L2950.44 470.66 L2954.29 472.25 L2956.31 471.11 L2958.89 473.69 L2957.75 475.71 L2959.34 479.56 L2961.58 480.18 L2961.58 483.82 L2959.34 484.44 L2957.75 488.29 L2958.89 490.31 L2956.31 492.89 L2954.29 491.75 L2950.44 493.34 L2949.82 495.58 L2946.18 495.58 L2945.56 493.34 L2941.71 491.75 L2939.69 492.89 L2937.11 490.31 L2938.25 488.29 L2936.66 484.44 L2934.42 483.82 L2934.42 480.18 L2936.66 479.56 L2938.25 475.71 L2937.11 473.69 L2939.69 471.11 L2941.71 472.25Z" fill="#fff" stroke="#fff" stroke-width="1.5" stroke-linejoin="round"/>
<circle cx="2948.0" cy="482.0" r="10.2" fill="#373737"/>
<path d="M2946.82 475.10 L2947.15 474.05 L2948.85 474.05 L2949.18 475.10 L2951.10 475.72 L2951.99 475.06 L2953.37 476.07 L2953.01 477.11 L2954.20 478.74 L2955.30 478.73 L2955.83 480.35 L2954.93 480.99 L2954.93 483.01 L2955.83 483.65 L2955.30 485.27 L2954.20 485.26 L2953.01 486.89 L2953.37 487.93 L2951.99 488.94 L2951.10 488.28 L2949.18 488.90 L2948.85 489.95 L2947.15 489.95 L2946.82 488.90 L2944.90 488.28 L2944.01 488.94 L2942.63 487.93 L2942.99 486.89 L2941.80 485.26 L2940.70 485.27 L2940.17 483.65 L2941.07 483.01 L2941.07 480.99 L2940.17 480.35 L2940.70 478.73 L2941.80 478.74 L2942.99 477.11 L2942.63 476.07 L2944.01 475.06 L2944.90 475.72Z" fill="#ed6b21" stroke="#ed6b21" stroke-width="0.8" stroke-linejoin="round"/>
<circle cx="2948.0" cy="482.0" r="5.4" fill="#373737"/>
<text x="2153.0" y="551.6" font-size="23.0" fill="#e2e2e2" letter-spacing="0.50" stroke="#e2e2e2" stroke-width="0.3">Supports:</text>
<rect x="2262.0" y="524.3" width="611.5" height="38.5" fill="#424242" stroke="#505050" stroke-width="1.2"/>
<text x="2268.4" y="550.0" font-size="23.0" fill="#e2e2e2" letter-spacing="0.50" stroke="#e2e2e2" stroke-width="0.3">None</text>
<rect x="2882.8" y="523.6" width="40.4" height="40.4" fill="#ffffff" rx="10.0"/>
<path d="M2896.6 541.2 l6.4 6.4 l6.4 -6.4" fill="none" stroke="#2b2b2b" stroke-width="3.3" stroke-linecap="round" stroke-linejoin="round"/>
<text x="2151.0" y="614.0" font-size="23.0" fill="#e2e2e2" letter-spacing="0.50" stroke="#e2e2e2" stroke-width="0.3">Infill:</text>
<rect x="2208.3" y="586.8" width="105.5" height="38.0" fill="#424242" stroke="#505050" stroke-width="1.2"/>
<text x="2214.0" y="612.0" font-size="23.0" fill="#e2e2e2" letter-spacing="0.50" stroke="#e2e2e2" stroke-width="0.3">15%</text>
<rect x="2323.3" y="585.6" width="40.4" height="40.4" fill="#ffffff" rx="10.0"/>
<path d="M2337.1 603.2 l6.4 6.4 l6.4 -6.4" fill="none" stroke="#2b2b2b" stroke-width="3.3" stroke-linecap="round" stroke-linejoin="round"/>
<text x="2421.0" y="614.0" font-size="23.0" fill="#e2e2e2" letter-spacing="0.50" stroke="#e2e2e2" stroke-width="0.3">Brim:</text>
<rect x="2484.0" y="592.0" width="28.0" height="28.0" fill="url(#cbx)" rx="6.0"/>
<rect x="2140.6" y="638.0" width="829.4" height="749.4" fill="#231f22"/>
<text x="2176.0" y="674.0" font-size="23.0" fill="#ffffff" letter-spacing="-0.20" stroke="#fff" stroke-width="0.45">Name</text>
<text x="2787.5" y="674.0" font-size="23.0" fill="#ffffff" text-anchor="middle" letter-spacing="0.40" stroke="#fff" stroke-width="0.45">Editing</text>
<rect x="2544.3" y="650.0" width="1.5" height="31.5" fill="#4a464a"/>
<rect x="2610.0" y="650.0" width="1.5" height="31.5" fill="#4a464a"/>
<rect x="2140.6" y="692.0" width="829.4" height="1.6" fill="#3e3a3e"/>
<text x="2178.5" y="723.9" font-size="25.5" fill="#e2e2e2" letter-spacing="0.85" stroke="#e2e2e2" stroke-width="0.3">single pipe towel hook.stl</text>
<path d="M2563.9 714.2 q14 -19.5 28 0 q-14 19.5 -28 0z" fill="#fff" stroke="#fff" stroke-width="0.6" stroke-linejoin="round"/>
<circle cx="2577.9" cy="714.2" r="8.4" fill="#231f22"/><circle cx="2577.9" cy="714.2" r="4.3" fill="#fff"/>
<path d="M2785.8 708.6 h-7 a2.5 2.5 0 0 0 -2.5 2.5 v14.5 a2.5 2.5 0 0 0 2.5 2.5 h14.5 a2.5 2.5 0 0 0 2.5 -2.5 v-7" fill="none" stroke="#fff" stroke-width="1.9"/>
<path d="M2793.76 703.23 L2794.04 701.86 L2795.96 701.86 L2796.24 703.23 L2798.20 704.04 L2799.37 703.28 L2800.72 704.63 L2799.96 705.80 L2800.77 707.76 L2802.14 708.04 L2802.14 709.96 L2800.77 710.24 L2799.96 712.20 L2800.72 713.37 L2799.37 714.72 L2798.20 713.96 L2796.24 714.77 L2795.96 716.14 L2794.04 716.14 L2793.76 714.77 L2791.80 713.96 L2790.63 714.72 L2789.28 713.37 L2790.04 712.20 L2789.23 710.24 L2787.86 709.96 L2787.86 708.04 L2789.23 707.76 L2790.04 705.80 L2789.28 704.63 L2790.63 703.28 L2791.80 704.04Z" fill="#ed6b21" stroke="#ed6b21" stroke-width="0.8" stroke-linejoin="round"/>
<circle cx="2795.0" cy="709.0" r="3.7" fill="#231f22"/>
<text x="2178.5" y="761.9" font-size="25.5" fill="#e2e2e2" letter-spacing="0.85" stroke="#e2e2e2" stroke-width="0.3">single pipe towel hook.stl</text>
<path d="M2563.9 752.2 q14 -19.5 28 0 q-14 19.5 -28 0z" fill="#fff" stroke="#fff" stroke-width="0.6" stroke-linejoin="round"/>
<circle cx="2577.9" cy="752.2" r="8.4" fill="#231f22"/><circle cx="2577.9" cy="752.2" r="4.3" fill="#fff"/>
<path d="M2785.8 746.6 h-7 a2.5 2.5 0 0 0 -2.5 2.5 v14.5 a2.5 2.5 0 0 0 2.5 2.5 h14.5 a2.5 2.5 0 0 0 2.5 -2.5 v-7" fill="none" stroke="#fff" stroke-width="1.9"/>
<path d="M2793.76 741.23 L2794.04 739.86 L2795.96 739.86 L2796.24 741.23 L2798.20 742.04 L2799.37 741.28 L2800.72 742.63 L2799.96 743.80 L2800.77 745.76 L2802.14 746.04 L2802.14 747.96 L2800.77 748.24 L2799.96 750.20 L2800.72 751.37 L2799.37 752.72 L2798.20 751.96 L2796.24 752.77 L2795.96 754.14 L2794.04 754.14 L2793.76 752.77 L2791.80 751.96 L2790.63 752.72 L2789.28 751.37 L2790.04 750.20 L2789.23 748.24 L2787.86 747.96 L2787.86 746.04 L2789.23 745.76 L2790.04 743.80 L2789.28 742.63 L2790.63 741.28 L2791.80 742.04Z" fill="#ed6b21" stroke="#ed6b21" stroke-width="0.8" stroke-linejoin="round"/>
<circle cx="2795.0" cy="747.0" r="3.7" fill="#231f22"/>
<text x="2178.5" y="799.9" font-size="25.5" fill="#e2e2e2" letter-spacing="0.85" stroke="#e2e2e2" stroke-width="0.3">single pipe towel hook.stl</text>
<path d="M2563.9 790.2 q14 -19.5 28 0 q-14 19.5 -28 0z" fill="#fff" stroke="#fff" stroke-width="0.6" stroke-linejoin="round"/>
<circle cx="2577.9" cy="790.2" r="8.4" fill="#231f22"/><circle cx="2577.9" cy="790.2" r="4.3" fill="#fff"/>
<path d="M2785.8 784.6 h-7 a2.5 2.5 0 0 0 -2.5 2.5 v14.5 a2.5 2.5 0 0 0 2.5 2.5 h14.5 a2.5 2.5 0 0 0 2.5 -2.5 v-7" fill="none" stroke="#fff" stroke-width="1.9"/>
<path d="M2793.76 779.23 L2794.04 777.86 L2795.96 777.86 L2796.24 779.23 L2798.20 780.04 L2799.37 779.28 L2800.72 780.63 L2799.96 781.80 L2800.77 783.76 L2802.14 784.04 L2802.14 785.96 L2800.77 786.24 L2799.96 788.20 L2800.72 789.37 L2799.37 790.72 L2798.20 789.96 L2796.24 790.77 L2795.96 792.14 L2794.04 792.14 L2793.76 790.77 L2791.80 789.96 L2790.63 790.72 L2789.28 789.37 L2790.04 788.20 L2789.23 786.24 L2787.86 785.96 L2787.86 784.04 L2789.23 783.76 L2790.04 781.80 L2789.28 780.63 L2790.63 779.28 L2791.80 780.04Z" fill="#ed6b21" stroke="#ed6b21" stroke-width="0.8" stroke-linejoin="round"/>
<circle cx="2795.0" cy="785.0" r="3.7" fill="#231f22"/>
<text x="2168.0" y="1419.8" font-size="23.0" fill="#e2e2e2" letter-spacing="0.40" stroke="#e2e2e2" stroke-width="0.3">Sliced Info</text>
<rect x="2146.6" y="1426.3" width="816.7" height="264.6" fill="#3c3c3c" rx="9.0" stroke="#484848" stroke-width="1.5"/>
<text x="2166.0" y="1463.7" font-size="23.0" fill="#e2e2e2" letter-spacing="0.20" stroke="#e2e2e2" stroke-width="0.3">Used Filament (m)</text>
<text x="2454.0" y="1463.7" font-size="23.0" fill="#e2e2e2" letter-spacing="0.40" stroke="#e2e2e2" stroke-width="0.3">19.02</text>
<text x="2166.0" y="1501.7" font-size="23.0" fill="#e2e2e2" letter-spacing="0.20" stroke="#e2e2e2" stroke-width="0.3">Used Filament (mm³)</text>
<text x="2454.0" y="1501.7" font-size="23.0" fill="#e2e2e2" letter-spacing="0.40" stroke="#e2e2e2" stroke-width="0.3">45750.69</text>
<text x="2166.0" y="1539.6" font-size="23.0" fill="#e2e2e2" letter-spacing="0.20" stroke="#e2e2e2" stroke-width="0.3">Used Filament (g)</text>
<text x="2454.0" y="1539.6" font-size="23.0" fill="#e2e2e2" letter-spacing="0.40" stroke="#e2e2e2" stroke-width="0.3">58.10</text>
<text x="2166.0" y="1577.5" font-size="23.0" fill="#e2e2e2" letter-spacing="0.20" stroke="#e2e2e2" stroke-width="0.3">Cost</text>
<text x="2454.0" y="1577.5" font-size="23.0" fill="#e2e2e2" letter-spacing="0.40" stroke="#e2e2e2" stroke-width="0.3">1.74</text>
<text x="2166.0" y="1616.0" font-size="23.0" fill="#e2e2e2" letter-spacing="0.37" stroke="#e2e2e2" stroke-width="0.3">Estimated printing time:</text>
<text x="2185.5" y="1643.8" font-size="23.0" fill="#e2e2e2" letter-spacing="0.50" stroke="#e2e2e2" stroke-width="0.3">- normal mode</text>
<text x="2454.0" y="1643.8" font-size="23.0" fill="#e2e2e2" letter-spacing="0.50" stroke="#e2e2e2" stroke-width="0.3">8h56m</text>
<text x="2185.5" y="1672.0" font-size="23.0" fill="#e2e2e2" letter-spacing="0.50" stroke="#e2e2e2" stroke-width="0.3">- stealth mode</text>
<text x="2454.0" y="1672.0" font-size="23.0" fill="#e2e2e2" letter-spacing="0.50" stroke="#e2e2e2" stroke-width="0.3">9h5m</text>
<rect x="2142.0" y="1711.3" width="825.7" height="38.0" fill="#6a6a6a" rx="8.0"/>
<text x="2553.4" y="1739.3" font-size="23.5" fill="#f4f4f4" font-weight="bold" text-anchor="middle" letter-spacing="0.30">Export G-code</text>
<text x="122.0" y="1808.6" font-size="23.0" fill="#c9c9c9" letter-spacing="0.21" stroke="#c9c9c9" stroke-width="0.3">G-code file exported to /Users/vk/Downloads/ srieginis karolis Elzei v3/single pipe towel hook_0.1mm_PETG_MK3S_8h56m.gcode...</text>
</svg>
</body></html>
